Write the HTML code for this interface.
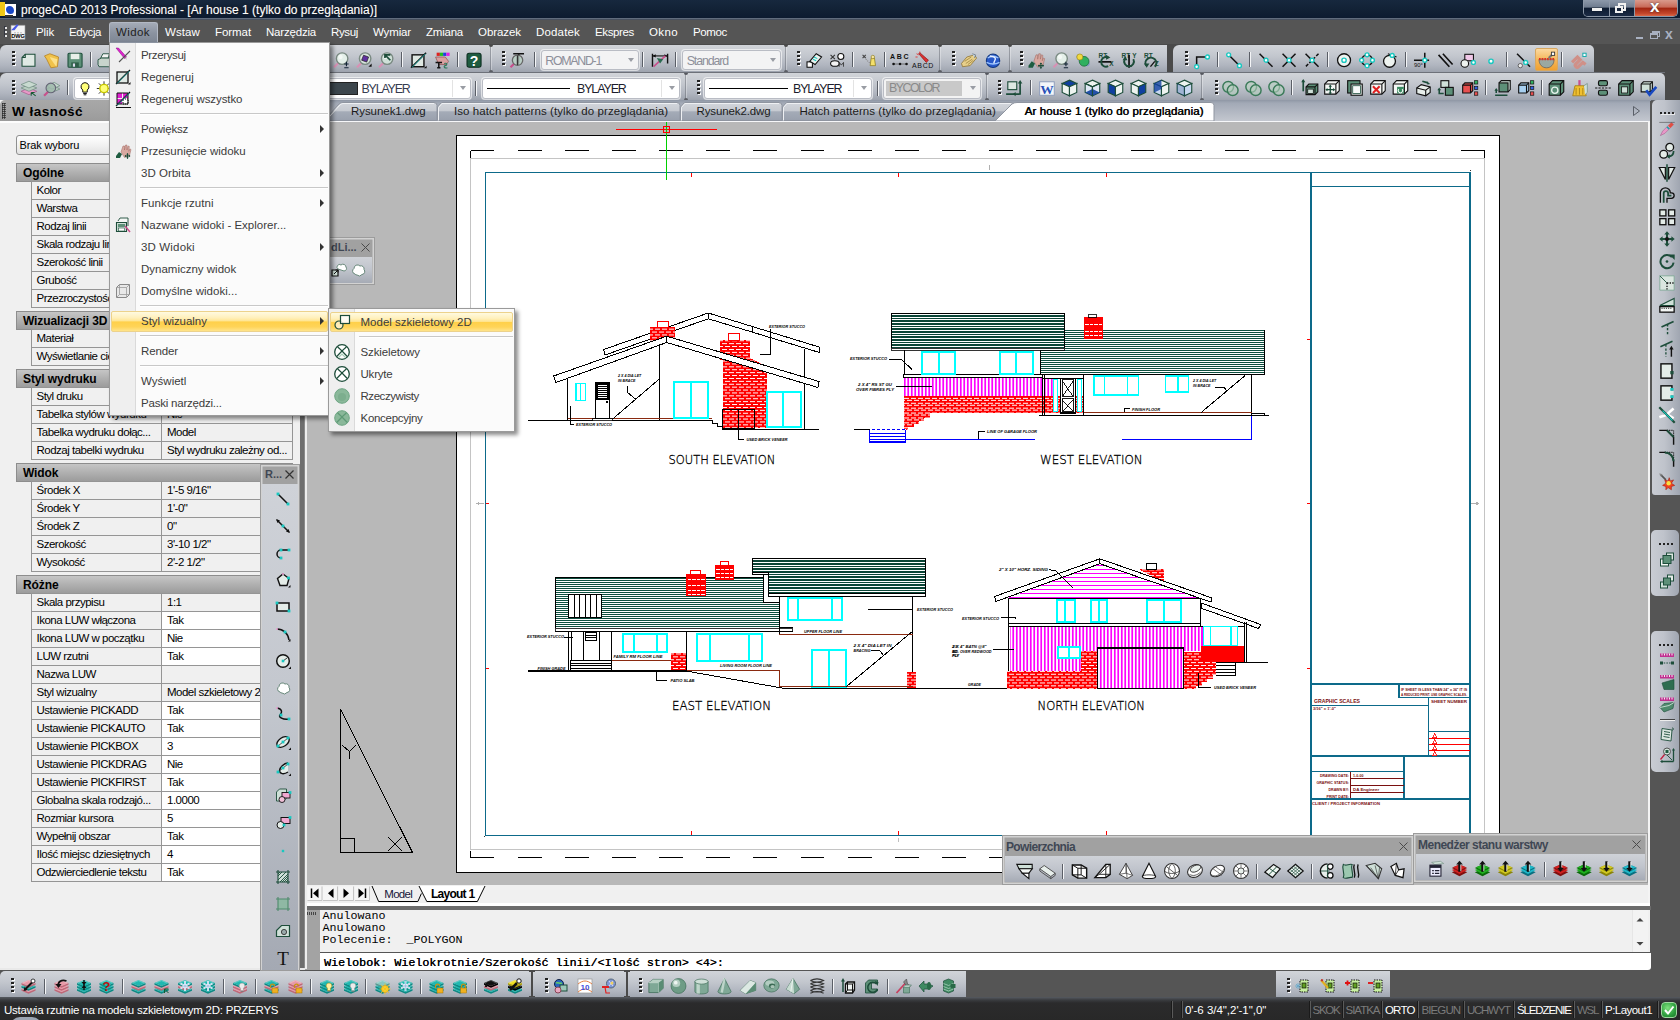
<!DOCTYPE html>
<html lang="pl"><head><meta charset="utf-8"><title>progeCAD 2013 Professional</title>
<style>
*{box-sizing:border-box;margin:0;padding:0}
html,body{width:1680px;height:1020px;overflow:hidden;background:#555;font-family:"Liberation Sans",sans-serif;font-size:12px;color:#000}
body{position:relative}
div{position:absolute}
.t{white-space:nowrap;line-height:1}
.tb{background:linear-gradient(#d1d4d9 0%,#c3c7ce 40%,#b0b5bf 75%,#9da3ae 100%)}
.sep{width:2px;height:15px;background:linear-gradient(90deg,#5a5e66 0 1px,#f4f5f7 1px 2px)}
.grip{width:2px;height:15px;background:repeating-linear-gradient(#222 0 2px,rgba(255,255,255,0) 2px 4px);filter:drop-shadow(1px 1px 0 rgba(255,255,255,.95))}
.combo{background:#fff;border:1px solid #b9bcc4;border-radius:3px;box-shadow:0 0 0 1px rgba(255,255,255,.6)}
.arr{width:0;height:0;border-left:3.5px solid transparent;border-right:3.5px solid transparent;border-top:4px solid #9a9da4}
.mi{left:0;width:218px;height:22px;color:#3c3c3c;font-size:12px;letter-spacing:.45px}
.mi span{position:absolute;left:31px;top:5px;white-space:nowrap;line-height:1}
.marr{width:0;height:0;border-top:4px solid transparent;border-bottom:4px solid transparent;border-left:4px solid #333}
.msep{height:1px;background:#c8c8c8;border-bottom:1px solid #fff;box-sizing:content-box}
.cat{left:16px;width:277px;height:19px;background:linear-gradient(#c6c6c6,#b0b0b0 50%,#9c9c9c);font-weight:bold;font-size:12px;border:1px solid #8d8d8d}
.cat span{position:absolute;left:6px;top:2.5px;line-height:1;white-space:nowrap;letter-spacing:-.1px}
.row{left:31px;width:262px;height:19px;border:1px solid #959595;background:#f0f0f0;font-size:11.5px}
.row i{position:absolute;font-style:normal;left:4.5px;top:2.5px;line-height:1;white-space:nowrap;letter-spacing:-.5px}
.row b{position:absolute;font-weight:normal;left:129px;top:0;width:130px;height:17px;border-left:1px solid #959595;overflow:hidden}
.row b u{position:absolute;text-decoration:none;left:5px;top:2.5px;line-height:1;white-space:nowrap;letter-spacing:-.5px}
.ft{background:#a1a1a1;border:1px solid #c9c9c9}
.fth{color:#3f4754;font-weight:bold;font-size:12px;letter-spacing:0}
.st{color:#fff;font-size:12px;top:1004px;white-space:nowrap;line-height:1}
.sd{top:1001px;width:2px;height:17px;background:linear-gradient(90deg,#1a1a1a 0 1px,#5a5a5a 1px 2px)}
.dim{color:#7d7d7d}
</style></head>
<body>
<div style="left:0px;top:0px;width:1680px;height:18px;background:linear-gradient(#17283e 0%,#122236 50%,#0d1b30 100%)"></div>
<div style="left:0px;top:18px;width:1680px;height:2px;background:linear-gradient(#6d7a8c,#3a4250)"></div>
<div style="left:0px;top:2px;width:5px;height:14px;background:#f0c818"></div>
<div style="left:5px;top:4px;width:11px;height:12px;background:#fff"></div>
<div style="left:6px;top:6px;width:8px;height:8px;background:#1848c8;border-radius:4px 5px 4px 5px"></div>
<div style="left:5px;top:15px;width:8px;height:2px;background:#333"></div>
<div class="t" style="left:21px;top:3.6px;font-size:12px;letter-spacing:0.007px;color:#fff;text-shadow:0 0 3px #000,0 0 1px #fff8">progeCAD 2013 Professional - [Ar house 1 (tylko do przeglądania)]</div>
<div style="left:1583px;top:0px;width:95px;height:17px;border:1px solid #8d98a8;border-top:none;border-radius:0 0 5px 5px;background:#1a2940"></div>
<div style="left:1584px;top:0px;width:26px;height:16px;background:linear-gradient(#8d99aa 0%,#6f7c8f 45%,#0d1b30 50%,#1b2a44 100%);border-right:1px solid #8d98a8;border-radius:0 0 0 4px"></div>
<div style="left:1610px;top:0px;width:25px;height:16px;background:linear-gradient(#8d99aa 0%,#6f7c8f 45%,#0d1b30 50%,#1b2a44 100%);border-right:1px solid #8d98a8"></div>
<div style="left:1635px;top:0px;width:42px;height:16px;background:linear-gradient(#d99a8c 0%,#c86a58 45%,#a02410 50%,#c4472c 85%,#dc6848 100%);border-radius:0 0 4px 0"></div>
<div style="left:1592px;top:8px;width:10px;height:3px;background:#f0f0f0;box-shadow:0 0 1px #000"></div>
<div style="left:1618px;top:3px;width:8px;height:8px;border:2px solid #f0f0f0"></div>
<div style="left:1615px;top:6px;width:8px;height:7px;border:2px solid #f0f0f0;background:#16243c"></div>
<div class="t" style="left:1650px;top:-2px;color:#fff;font-weight:bold;font-size:17px;text-shadow:0 0 2px #333">x</div>
<div style="left:0px;top:20px;width:1680px;height:24px;background:#555"></div>
<div style="left:5px;top:26.5px;width:2px;height:11px;background:repeating-linear-gradient(#e8e8e8 0 2px,transparent 2px 4px);box-shadow:-1px -1px 0 rgba(30,35,50,.6)"></div>
<div style="left:109px;top:22px;width:49px;height:21px;background:linear-gradient(#a4abb7,#8b93a0 50%,#7d8592);border:1px solid #b3b9c4;border-bottom:none;border-radius:3px 3px 0 0"></div>
<div class="t" style="left:36px;top:26.5px;font-size:11.5px;letter-spacing:-0.133px;color:#fff">Plik</div>
<div class="t" style="left:69px;top:26.5px;font-size:11.5px;letter-spacing:-0.422px;color:#fff">Edycja</div>
<div class="t" style="left:116px;top:26.5px;font-size:11.5px;letter-spacing:0.409px;color:#1e1e1e">Widok</div>
<div class="t" style="left:165px;top:26.5px;font-size:11.5px;letter-spacing:0.1px;color:#fff">Wstaw</div>
<div class="t" style="left:215px;top:26.5px;font-size:11.5px;letter-spacing:-0.07px;color:#fff">Format</div>
<div class="t" style="left:266px;top:26.5px;font-size:11.5px;letter-spacing:-0.198px;color:#fff">Narzędzia</div>
<div class="t" style="left:331px;top:26.5px;font-size:11.5px;letter-spacing:-0.353px;color:#fff">Rysuj</div>
<div class="t" style="left:373px;top:26.5px;font-size:11.5px;letter-spacing:-0.146px;color:#fff">Wymiar</div>
<div class="t" style="left:426px;top:26.5px;font-size:11.5px;letter-spacing:-0.227px;color:#fff">Zmiana</div>
<div class="t" style="left:478px;top:26.5px;font-size:11.5px;letter-spacing:-0.067px;color:#fff">Obrazek</div>
<div class="t" style="left:536px;top:26.5px;font-size:11.5px;letter-spacing:0.165px;color:#fff">Dodatek</div>
<div class="t" style="left:595px;top:26.5px;font-size:11.5px;letter-spacing:-0.364px;color:#fff">Ekspres</div>
<div class="t" style="left:649px;top:26.5px;font-size:11.5px;letter-spacing:0.375px;color:#fff">Okno</div>
<div class="t" style="left:693px;top:26.5px;font-size:11.5px;letter-spacing:-0.359px;color:#fff">Pomoc</div>
<div style="left:1636px;top:37px;width:7px;height:2px;background:#a9b1c1"></div>
<div style="left:1652px;top:31px;width:8px;height:6px;border:1px solid #a9b1c1;border-top-width:2px"></div>
<div style="left:1650px;top:33px;width:8px;height:6px;border:1px solid #a9b1c1;border-top-width:2px;background:#555"></div>
<div class="t" style="left:1665px;top:27px;color:#a9b1c1;font-weight:bold;font-size:14px">x</div>
<svg style="position:absolute;left:307px;top:121px" width="1342" height="764" viewBox="307 121 1342 764" font-family="Liberation Sans,sans-serif" shape-rendering="crispEdges"><defs>
<pattern id="gh" width="10" height="2" patternUnits="userSpaceOnUse"><rect width="10" height="2" fill="#fff"/><rect y="0" width="10" height="1" fill="#0d4f3f"/></pattern>
<pattern id="gh2" width="10" height="8" patternUnits="userSpaceOnUse"><rect width="10" height="8" fill="#fff"/><rect y="0" width="10" height="2" fill="#0a4536"/><rect y="3" width="10" height="2" fill="#0a4536"/><rect y="6" width="10" height="1" fill="#0a4536"/></pattern>
<pattern id="br" width="7" height="5.8" patternUnits="userSpaceOnUse"><rect width="7" height="5.8" fill="#ff0000"/><rect x="0.8" y="1" width="5" height=".85" fill="#fff"/><rect x="4.3" y="3.9" width="5" height=".85" fill="#fff"/><rect x="-2.7" y="3.9" width="5" height=".85" fill="#fff"/></pattern>
<pattern id="br2" width="7" height="4.9" patternUnits="userSpaceOnUse"><rect width="7" height="4.9" fill="#ff0000"/><rect x="0.8" y="0.8" width="5" height=".85" fill="#fff"/><rect x="4.3" y="3.25" width="5" height=".85" fill="#fff"/><rect x="-2.7" y="3.25" width="5" height=".85" fill="#fff"/></pattern>
<pattern id="mv" x="0" width="3.5" height="10" patternUnits="userSpaceOnUse"><rect width="3.5" height="10" fill="#fff"/><rect x="0.8" width="1.9" height="10" fill="#ff00ff"/></pattern>
<pattern id="mv2" x="0" width="3" height="10" patternUnits="userSpaceOnUse"><rect width="3" height="10" fill="#fff"/><rect x="1" width="1.6" height="10" fill="#ff00ff"/></pattern>
<pattern id="mh" width="10" height="4" patternUnits="userSpaceOnUse"><rect width="10" height="4" fill="#fff"/><rect y="1" width="10" height="1" fill="#ff00ff"/></pattern>
</defs><rect x="307" y="121" width="1342" height="764" fill="#b8b8b8"/><rect x="456.500" y="135.500" width="1043" height="737" fill="#fff" stroke="#000" stroke-width="1"/><line x1="470.500" y1="150.5" x2="1484.500" y2="150.5" stroke="#000" stroke-width="1" stroke-dasharray="23.850 23.300"/><line x1="470.500" y1="857.5" x2="1484.500" y2="857.5" stroke="#000" stroke-width="1" stroke-dasharray="23.850 23.300"/><line x1="470.5" y1="150.5" x2="470.5" y2="157.5" stroke="#000" stroke-width="1" /><line x1="1484.5" y1="150.5" x2="1484.5" y2="157.5" stroke="#000" stroke-width="1" /><line x1="470.5" y1="857.5" x2="470.5" y2="850.5" stroke="#000" stroke-width="1" /><line x1="1484.5" y1="857.5" x2="1484.5" y2="850.5" stroke="#000" stroke-width="1" /><rect x="470.500" y="158" width="1014" height="691.500" fill="none" stroke="#c4c4c4" stroke-width="1"/><rect x="485.500" y="172.500" width="984.500" height="663" fill="none" stroke="#0d6a8a" stroke-width="1.2"/><line x1="1311" y1="172" x2="1311" y2="835" stroke="#0d6a8a" stroke-width="2.2" /><line x1="1311" y1="186.5" x2="1470" y2="186.5" stroke="#0d6a8a" stroke-width="1.2" /><line x1="1311" y1="684" x2="1470" y2="684" stroke="#0d6a8a" stroke-width="1.5" /><rect x="1399" y="684" width="71.00" height="13.50" fill="none" stroke="#0d6a8a" stroke-width="1.2" /><line x1="1311" y1="705" x2="1428.5" y2="705" stroke="#0d6a8a" stroke-width="1" /><line x1="1428.5" y1="697.5" x2="1428.5" y2="756" stroke="#0d6a8a" stroke-width="1.2" /><line x1="1428.5" y1="731.5" x2="1470" y2="731.5" stroke="#0d6a8a" stroke-width="1" /><line x1="1428.5" y1="738.5" x2="1470" y2="738.5" stroke="#ff0000" stroke-width="1" /><line x1="1428.5" y1="744.5" x2="1470" y2="744.5" stroke="#ff0000" stroke-width="1" /><line x1="1428.5" y1="750.5" x2="1470" y2="750.5" stroke="#ff0000" stroke-width="1" /><line x1="1311" y1="756" x2="1470" y2="756" stroke="#0d6a8a" stroke-width="1.5" /><line x1="1404" y1="756" x2="1404" y2="799" stroke="#0d6a8a" stroke-width="1.2" /><line x1="1311" y1="771.5" x2="1404" y2="771.5" stroke="#0d6a8a" stroke-width="1" /><line x1="1350.5" y1="778.5" x2="1404" y2="778.5" stroke="#7a1010" stroke-width="1" /><line x1="1350.5" y1="785" x2="1404" y2="785" stroke="#7a1010" stroke-width="1" /><line x1="1350.5" y1="792" x2="1404" y2="792" stroke="#7a1010" stroke-width="1" /><line x1="1350.5" y1="771.5" x2="1350.5" y2="799" stroke="#7a1010" stroke-width="1" /><line x1="1311" y1="799" x2="1470" y2="799" stroke="#0d6a8a" stroke-width="2" /><text x="1314" y="703" font-size="5.6" font-style="normal" font-weight="bold" text-anchor="start" fill="#7a1010" textLength="46" lengthAdjust="spacingAndGlyphs">GRAPHIC SCALES</text><text x="1313" y="710" font-size="4" font-style="normal" font-weight="bold" text-anchor="start" fill="#7a1010">3/16" = 1'-0"</text><text x="1431" y="703" font-size="4" font-style="normal" font-weight="bold" text-anchor="start" fill="#7a1010" textLength="36" lengthAdjust="spacingAndGlyphs">SHEET NUMBER</text><text x="1401" y="691" font-size="3" font-style="normal" font-weight="bold" text-anchor="start" fill="#7a1010" textLength="66" lengthAdjust="spacingAndGlyphs">IF SHEET IS LESS THAN 24" x 36" IT IS</text><text x="1401" y="695.5" font-size="3" font-style="normal" font-weight="bold" text-anchor="start" fill="#7a1010" textLength="66" lengthAdjust="spacingAndGlyphs">A REDUCED PRINT. USE GRAPHIC SCALES.</text><text x="1349" y="777" font-size="3.6" font-style="normal" font-weight="bold" text-anchor="end" fill="#7a1010">DRAWING DATE:</text><text x="1349" y="784" font-size="3.6" font-style="normal" font-weight="bold" text-anchor="end" fill="#7a1010">GRAPHIC STATUS:</text><text x="1349" y="791" font-size="3.6" font-style="normal" font-weight="bold" text-anchor="end" fill="#7a1010">DRAWN BY:</text><text x="1349" y="798" font-size="3.6" font-style="normal" font-weight="bold" text-anchor="end" fill="#7a1010">PRINT DATE:</text><text x="1353" y="777" font-size="3.6" font-style="normal" font-weight="bold" text-anchor="start" fill="#7a1010">1-0-00</text><text x="1353" y="791" font-size="4.4" font-style="normal" font-weight="bold" text-anchor="start" fill="#7a1010">DA  Engineer</text><text x="1312" y="804.5" font-size="3.6" font-style="normal" font-weight="bold" text-anchor="start" fill="#7a1010" textLength="68" lengthAdjust="spacingAndGlyphs">CLIENT / PROJECT INFORMATION</text><polygon points="1432,737.5 1434.5,732.5 1437,737.5" fill="#fff" stroke="#ff0000" stroke-width="0.8" /><polygon points="1432,743.5 1434.5,738.5 1437,743.5" fill="#fff" stroke="#ff0000" stroke-width="0.8" /><polygon points="1432,749.5 1434.5,744.5 1437,749.5" fill="#fff" stroke="#ff0000" stroke-width="0.8" /><polygon points="1432,755.5 1434.5,750.5 1437,755.5" fill="#fff" stroke="#ff0000" stroke-width="0.8" /><line x1="691.5" y1="173" x2="691.5" y2="177" stroke="#ff0000" stroke-width="1" /><line x1="691.5" y1="831" x2="691.5" y2="835" stroke="#ff0000" stroke-width="1" /><line x1="898.5" y1="173" x2="898.5" y2="177" stroke="#ff0000" stroke-width="1" /><line x1="898.5" y1="831" x2="898.5" y2="835" stroke="#ff0000" stroke-width="1" /><line x1="1106.5" y1="173" x2="1106.5" y2="177" stroke="#ff0000" stroke-width="1" /><line x1="1106.5" y1="831" x2="1106.5" y2="835" stroke="#ff0000" stroke-width="1" /><line x1="486" y1="339.5" x2="489" y2="339.5" stroke="#ff0000" stroke-width="1" /><line x1="1307" y1="339.5" x2="1310" y2="339.5" stroke="#ff0000" stroke-width="1" /><line x1="486" y1="503.5" x2="489" y2="503.5" stroke="#ff0000" stroke-width="1" /><line x1="1307" y1="503.5" x2="1310" y2="503.5" stroke="#ff0000" stroke-width="1" /><line x1="486" y1="668.5" x2="489" y2="668.5" stroke="#ff0000" stroke-width="1" /><line x1="1307" y1="668.5" x2="1310" y2="668.5" stroke="#ff0000" stroke-width="1" /><line x1="476" y1="503.5" x2="484" y2="503.5" stroke="#b0b0b0" stroke-width="1" /><line x1="1471" y1="503.5" x2="1479" y2="503.5" stroke="#b0b0b0" stroke-width="1" /><polygon points="1479,503.5 1476,501.5 1476,505.5" fill="#b0b0b0" stroke="none" stroke-width="1" /><polygon points="476,503.5 479,501.5 479,505.5" fill="#b0b0b0" stroke="none" stroke-width="1" /><line x1="989.5" y1="165" x2="989.5" y2="170" stroke="#b0b0b0" stroke-width="1" /><line x1="898.5" y1="838" x2="898.5" y2="842" stroke="#c0c0c0" stroke-width="1" /><rect x="1470" y="170" width="1.2" height="1.2" fill="#333"/><rect x="484" y="836" width="1.2" height="1.2" fill="#333"/><line x1="616" y1="129.5" x2="717" y2="129.5" stroke="#ff0000" stroke-width="1" /><line x1="666.5" y1="122" x2="666.5" y2="180" stroke="#00d000" stroke-width="1" /><rect x="663.5" y="126.5" width="6.00" height="6.00" fill="none" stroke="#ff0000" stroke-width="1" /><polyline points="340.5,709 340.5,852.5 412.5,852.5 340.5,709" stroke="#000" stroke-width="1" fill="none" /><polyline points="340.5,838.5 354.5,838.5 354.5,852.5" stroke="#000" stroke-width="1" fill="none" /><line x1="388" y1="837" x2="402" y2="851" stroke="#000" stroke-width="1" /><line x1="402" y1="837" x2="388" y2="851" stroke="#000" stroke-width="1" /><polyline points="342,745 349.5,751.5 356,745" stroke="#000" stroke-width="1" fill="none" /><line x1="349.5" y1="751.5" x2="349.5" y2="758.5" stroke="#000" stroke-width="1" /><polygon points="603.6,349.5 708.3,313 819,347 819.5,352.5 708.3,318.8 605,355" fill="#fff" stroke="#000" stroke-width="1" /><line x1="708.3" y1="313" x2="708.3" y2="318.8" stroke="#000" stroke-width="1" /><line x1="752" y1="326.5" x2="752" y2="332" stroke="#000" stroke-width="1" /><rect x="649.5" y="327" width="25.50" height="15.00" fill="url(#br)" stroke="none" stroke-width="0" /><rect x="657" y="321" width="11.00" height="6.00" fill="#fff" stroke="#ff0000" stroke-width="1" /><line x1="804.8" y1="348.5" x2="804.8" y2="429" stroke="#000" stroke-width="1" /><rect x="719.5" y="340" width="30.00" height="20.00" fill="url(#br)" stroke="none" stroke-width="0" /><rect x="728.6" y="333.6" width="10.70" height="6.40" fill="#fff" stroke="#ff0000" stroke-width="1" /><polygon points="722.6,358 749.5,358 766.7,366.5 766.7,428 722.6,428" fill="url(#br)" stroke="none" stroke-width="1" /><polygon points="553.6,376 666.7,336.2 819,381.5 818,387.5 666.7,342.5 556,382.5" fill="#fff" stroke="#000" stroke-width="1" /><line x1="666.7" y1="336.2" x2="666.7" y2="342.5" stroke="#000" stroke-width="1" /><line x1="567.9" y1="378" x2="567.9" y2="420.5" stroke="#000" stroke-width="1" /><line x1="659.5" y1="344" x2="659.5" y2="420.5" stroke="#000" stroke-width="1" /><polyline points="528,420.5 712,420.5 712,423 717,423 717,426 722.6,426 722.6,429.3 819,429.3" stroke="#000" stroke-width="1" fill="none" /><line x1="568" y1="418.5" x2="712" y2="418.5" stroke="#8a2a10" stroke-width="1" /><rect x="576" y="383.6" width="9.70" height="17.10" fill="#fff" stroke="#00ffff" stroke-width="1.2" /><line x1="580.8" y1="383.6" x2="580.8" y2="400.7" stroke="#00ffff" stroke-width="1.2" /><rect x="595.5" y="382.5" width="14.00" height="36.00" fill="#fff" stroke="#000" stroke-width="1.6" /><rect x="596" y="383" width="13.00" height="16.50" fill="#000" stroke="none" stroke-width="0" /><line x1="598" y1="385.5" x2="607" y2="385.5" stroke="#fff" stroke-width="1" /><line x1="598" y1="387.5" x2="607" y2="387.5" stroke="#fff" stroke-width="1" /><line x1="598" y1="389.5" x2="607" y2="389.5" stroke="#fff" stroke-width="1" /><line x1="598" y1="391.5" x2="607" y2="391.5" stroke="#fff" stroke-width="1" /><line x1="598" y1="393.5" x2="607" y2="393.5" stroke="#fff" stroke-width="1" /><line x1="598" y1="395.5" x2="607" y2="395.5" stroke="#fff" stroke-width="1" /><line x1="598" y1="397.5" x2="607" y2="397.5" stroke="#fff" stroke-width="1" /><rect x="606" y="400.5" width="2.00" height="2.00" fill="#000" stroke="none" stroke-width="0" /><rect x="592.5" y="418.6" width="19.50" height="1.90" fill="#fff" stroke="#000" stroke-width="0.8" /><rect x="673.8" y="381.7" width="33.80" height="36.20" fill="#fff" stroke="#00ffff" stroke-width="2" /><line x1="690.5" y1="381.7" x2="690.5" y2="417.9" stroke="#00ffff" stroke-width="2" /><rect x="767" y="391.7" width="33.50" height="35.30" fill="#fff" stroke="#00ffff" stroke-width="2" /><line x1="783" y1="391.7" x2="783" y2="427" stroke="#00ffff" stroke-width="2" /><rect x="722.6" y="409.8" width="32.20" height="18.70" fill="none" stroke="#000" stroke-width="1.2" /><line x1="613" y1="418.6" x2="659" y2="379.3" stroke="#000" stroke-width="1" /><polyline points="627.5,385.5 627.5,392.5 635.5,399" stroke="#000" stroke-width="1" fill="none" /><text x="618" y="376.5" font-size="3.6" font-style="italic" font-weight="bold" text-anchor="start" fill="#000">2 X 4 DIA LET</text><text x="618" y="381.5" font-size="3.6" font-style="italic" font-weight="bold" text-anchor="start" fill="#000">IN BRACE</text><polyline points="570.5,406 570.5,424.5 574,424.5" stroke="#000" stroke-width="1" fill="none" /><text x="576" y="426" font-size="3.6" font-style="italic" font-weight="bold" text-anchor="start" fill="#000" textLength="36" lengthAdjust="spacingAndGlyphs">EXTERIOR STUCCO</text><polyline points="738.3,410 738.3,439.5 744,439.5" stroke="#000" stroke-width="1" fill="none" /><text x="746.5" y="441" font-size="3.6" font-style="italic" font-weight="bold" text-anchor="start" fill="#000" textLength="41" lengthAdjust="spacingAndGlyphs">USED BRICK VENEER</text><polyline points="770.5,329 770.5,354.5 760,354.5" stroke="#000" stroke-width="1" fill="none" /><text x="769" y="328" font-size="3.6" font-style="italic" font-weight="bold" text-anchor="start" fill="#000" textLength="36" lengthAdjust="spacingAndGlyphs">EXTERIOR STUCCO</text><text x="668.6" y="464" font-family="DejaVu Sans,sans-serif" font-weight="200" font-size="13" textLength="106.6" lengthAdjust="spacingAndGlyphs" fill="#000" stroke="#000" stroke-width=".3">SOUTH ELEVATION</text><rect x="1040.4" y="330" width="224.10" height="44.30" fill="url(#gh)" stroke="none" stroke-width="0" /><polyline points="1040.4,330 1040.4,374.3 1264.5,374.3 1264.5,330" stroke="#000" stroke-width="1" fill="none" /><rect x="891.2" y="313.3" width="173.30" height="34.70" fill="url(#gh2)" stroke="#000" stroke-width="1" /><rect x="891.2" y="348" width="173.30" height="2.20" fill="#fff" stroke="#000" stroke-width="0.8" /><rect x="1083.7" y="317.4" width="19.20" height="21.10" fill="#ff0000" stroke="none" stroke-width="0" /><line x1="1085" y1="324" x2="1101.5" y2="324" stroke="#fff" stroke-width="1" stroke-dasharray="3.5 1"/><line x1="1085" y1="331" x2="1101.5" y2="331" stroke="#fff" stroke-width="1" stroke-dasharray="3.5 1"/><line x1="1085" y1="335" x2="1101.5" y2="335" stroke="#fff" stroke-width="1" stroke-dasharray="3.5 1"/><rect x="1088.6" y="314" width="8.20" height="3.40" fill="#fff" stroke="#000" stroke-width="0.8" /><line x1="904.3" y1="350.2" x2="904.3" y2="374.3" stroke="#000" stroke-width="1" /><line x1="903.5" y1="374.3" x2="1041.3" y2="374.3" stroke="#000" stroke-width="1" /><line x1="1040.4" y1="350" x2="1040.4" y2="374" stroke="#000" stroke-width="1" /><rect x="921.6" y="352.2" width="33.40" height="21.30" fill="#fff" stroke="#00ffff" stroke-width="2" /><line x1="938.6" y1="352.2" x2="938.6" y2="373.5" stroke="#00ffff" stroke-width="2" /><rect x="999.6" y="352.2" width="32.90" height="21.30" fill="#fff" stroke="#00ffff" stroke-width="2" /><line x1="1016" y1="352.2" x2="1016" y2="373.5" stroke="#00ffff" stroke-width="2" /><rect x="903.5" y="378" width="150.10" height="18.20" fill="url(#mv)" stroke="none" stroke-width="0" /><line x1="903.5" y1="377.8" x2="1042" y2="377.8" stroke="#000" stroke-width="1" /><line x1="903.5" y1="374.3" x2="903.5" y2="378" stroke="#000" stroke-width="1" /><polygon points="903.5,396.2 1083.7,396.2 1083.7,413.2 929.7,413.2 929.7,417.5 923.8,417.5 923.8,421 918.9,421 918.9,424 914,424 914,427 908.1,427 908.1,430 903.5,430" fill="url(#br2)" stroke="none" stroke-width="1" /><line x1="1042" y1="374.3" x2="1042" y2="415.5" stroke="#000" stroke-width="1" /><line x1="1044" y1="374.3" x2="1044" y2="415.5" stroke="#000" stroke-width="1" /><line x1="1042" y1="378" x2="1083.7" y2="378" stroke="#000" stroke-width="1" /><rect x="1053.5" y="379.5" width="4.00" height="32.00" fill="#fff" stroke="#00ffff" stroke-width="1" /><rect x="1077.5" y="379.5" width="4.00" height="32.00" fill="#fff" stroke="#00ffff" stroke-width="1" /><rect x="1060.5" y="378.5" width="15.00" height="34.50" fill="#fff" stroke="#000" stroke-width="1.5" /><rect x="1062" y="379.5" width="11.50" height="16.50" fill="#fff" stroke="#000" stroke-width="0.9" /><line x1="1062" y1="379.5" x2="1073.5" y2="396" stroke="#000" stroke-width="0.9" /><line x1="1073.5" y1="379.5" x2="1062" y2="396" stroke="#000" stroke-width="0.9" /><rect x="1062" y="398.5" width="11.50" height="12.50" fill="#fff" stroke="#000" stroke-width="0.9" /><line x1="1062" y1="398.5" x2="1073.5" y2="411" stroke="#000" stroke-width="0.9" /><line x1="1073.5" y1="398.5" x2="1062" y2="411" stroke="#000" stroke-width="0.9" /><line x1="1083.7" y1="374" x2="1083.7" y2="415.5" stroke="#000" stroke-width="1" /><line x1="1251.6" y1="374" x2="1251.6" y2="415.5" stroke="#000" stroke-width="1" /><line x1="1251.6" y1="416" x2="1251.6" y2="439.2" stroke="#0000ff" stroke-width="1.2" /><line x1="1039.3" y1="415.5" x2="1269" y2="415.5" stroke="#000" stroke-width="1" /><polyline points="1251.6,413.5 1264.5,413.5 1264.5,415.5" stroke="#000" stroke-width="1" fill="none" /><line x1="1083.7" y1="412.5" x2="1251.6" y2="412.5" stroke="#8a2a10" stroke-width="1" /><rect x="1094" y="376" width="44.50" height="18.90" fill="#fff" stroke="#00ffff" stroke-width="1.4" /><line x1="1104.2" y1="376" x2="1104.2" y2="394.9" stroke="#00ffff" stroke-width="1.4" /><line x1="1127.5" y1="376" x2="1127.5" y2="394.9" stroke="#00ffff" stroke-width="1.4" /><rect x="1165.3" y="376" width="23.00" height="16.00" fill="#fff" stroke="#00ffff" stroke-width="1.4" /><line x1="1178" y1="376" x2="1178" y2="392" stroke="#00ffff" stroke-width="1.4" /><line x1="1200.9" y1="412.7" x2="1245.3" y2="375.4" stroke="#000" stroke-width="1" /><polyline points="1215,387.5 1224,387.5 1227,391" stroke="#000" stroke-width="1" fill="none" /><text x="1193" y="381.5" font-size="3.6" font-style="italic" font-weight="bold" text-anchor="start" fill="#000">2 X 4 DIA LET</text><text x="1193" y="386.5" font-size="3.6" font-style="italic" font-weight="bold" text-anchor="start" fill="#000">IN BRACE</text><polyline points="1124,411.5 1124,408.8 1130,408.8" stroke="#000" stroke-width="1" fill="none" /><text x="1132" y="410.5" font-size="3.6" font-style="italic" font-weight="bold" text-anchor="start" fill="#000" textLength="28" lengthAdjust="spacingAndGlyphs">FINISH FLOOR</text><line x1="905.7" y1="439.2" x2="1035" y2="439.2" stroke="#0000ff" stroke-width="1.2" /><line x1="1122" y1="439.2" x2="1251.6" y2="439.2" stroke="#0000ff" stroke-width="1.2" /><rect x="869.6" y="429.6" width="36.10" height="12.40" fill="#fff" stroke="#0000ff" stroke-width="1.2" /><line x1="869.6" y1="433" x2="905.7" y2="433" stroke="#0000ff" stroke-width="1" /><line x1="869.6" y1="436" x2="905.7" y2="436" stroke="#0000ff" stroke-width="1" /><line x1="869.6" y1="439" x2="905.7" y2="439" stroke="#0000ff" stroke-width="1" /><line x1="869.6" y1="429.6" x2="905.7" y2="429.6" stroke="#fff" stroke-width="1.4" stroke-dasharray="2 3"/><line x1="853.7" y1="429" x2="869.6" y2="429" stroke="#000" stroke-width="1" /><polyline points="978.5,439.2 978.5,431 985,431" stroke="#000" stroke-width="1" fill="none" /><text x="987" y="432.5" font-size="3.6" font-style="italic" font-weight="bold" text-anchor="start" fill="#000" textLength="50" lengthAdjust="spacingAndGlyphs">LINE OF GARAGE FLOOR</text><text x="850" y="360" font-size="3.6" font-style="italic" font-weight="bold" text-anchor="start" fill="#000" textLength="37" lengthAdjust="spacingAndGlyphs">EXTERIOR STUCCO</text><polyline points="889,359 901,359 912,369.5" stroke="#000" stroke-width="1" fill="none" /><text x="858" y="385.5" font-size="3.6" font-style="italic" font-weight="bold" text-anchor="start" fill="#000" textLength="34" lengthAdjust="spacingAndGlyphs">2 X 4" RS ST GU</text><text x="856" y="390.5" font-size="3.6" font-style="italic" font-weight="bold" text-anchor="start" fill="#000" textLength="38" lengthAdjust="spacingAndGlyphs">OVER FIBRES PLY</text><line x1="896" y1="386.5" x2="932" y2="386.5" stroke="#000" stroke-width="1" /><text x="1040" y="464" font-family="DejaVu Sans,sans-serif" font-weight="200" font-size="13" textLength="102.6" lengthAdjust="spacingAndGlyphs" fill="#000" stroke="#000" stroke-width=".3">WEST ELEVATION</text><polygon points="752.2,558.3 925.8,558.3 925.8,596.5 768.3,596.5 768.3,574.4 752.2,574.4" fill="url(#gh2)" stroke="#000" stroke-width="1" /><rect x="768.3" y="593.5" width="157.50" height="3.00" fill="#fff" stroke="#000" stroke-width="1" /><rect x="752.2" y="572" width="16.10" height="2.40" fill="#fff" stroke="#000" stroke-width="1" /><polygon points="555.3,577.5 763.5,577.5 763.5,602 779.4,602 779.4,627.6 792.5,627.6 792.5,631.2 555.3,631.2" fill="url(#gh)" stroke="#000" stroke-width="1" /><line x1="763.5" y1="574.4" x2="763.5" y2="602" stroke="#000" stroke-width="1" /><rect x="555.3" y="628.2" width="237.20" height="3.00" fill="#fff" stroke="#000" stroke-width="0.8" /><rect x="568.5" y="594.8" width="32.80" height="22.40" fill="#fff" stroke="#000" stroke-width="1" /><line x1="574" y1="594.8" x2="574" y2="617.2" stroke="#000" stroke-width="1" /><line x1="579.5" y1="594.8" x2="579.5" y2="617.2" stroke="#000" stroke-width="1" /><line x1="585" y1="594.8" x2="585" y2="617.2" stroke="#000" stroke-width="1" /><line x1="590.5" y1="594.8" x2="590.5" y2="617.2" stroke="#000" stroke-width="1" /><line x1="596" y1="594.8" x2="596" y2="617.2" stroke="#000" stroke-width="1" /><rect x="686.2" y="574.2" width="19.70" height="21.90" fill="#ff0000" stroke="none" stroke-width="0" /><rect x="690.8" y="570" width="9.20" height="4.20" fill="#fff" stroke="#ff0000" stroke-width="1" /><line x1="687.5" y1="579" x2="704.5" y2="579" stroke="#fff" stroke-width="1" stroke-dasharray="3.5 1"/><line x1="687.5" y1="585" x2="704.5" y2="585" stroke="#fff" stroke-width="1" stroke-dasharray="3.5 1"/><line x1="687.5" y1="590" x2="704.5" y2="590" stroke="#fff" stroke-width="1" stroke-dasharray="3.5 1"/><line x1="687.5" y1="594" x2="704.5" y2="594" stroke="#fff" stroke-width="1" stroke-dasharray="3.5 1"/><rect x="715" y="565.2" width="19.10" height="14.50" fill="#ff0000" stroke="none" stroke-width="0" /><rect x="720.4" y="561.4" width="8.20" height="3.80" fill="#fff" stroke="#ff0000" stroke-width="1" /><line x1="716" y1="569" x2="733" y2="569" stroke="#fff" stroke-width="1" stroke-dasharray="3.5 1"/><line x1="716" y1="573" x2="733" y2="573" stroke="#fff" stroke-width="1" stroke-dasharray="3.5 1"/><line x1="716" y1="577" x2="733" y2="577" stroke="#fff" stroke-width="1" stroke-dasharray="3.5 1"/><line x1="568.5" y1="631.2" x2="568.5" y2="670.9" stroke="#000" stroke-width="1" /><line x1="571.2" y1="631.2" x2="571.2" y2="670.9" stroke="#000" stroke-width="1" /><line x1="611.7" y1="631.2" x2="611.7" y2="670.9" stroke="#000" stroke-width="1" /><line x1="686.7" y1="631.2" x2="686.7" y2="670" stroke="#000" stroke-width="1" /><line x1="779.3" y1="596" x2="779.3" y2="634.5" stroke="#000" stroke-width="1" /><line x1="912.6" y1="596.1" x2="912.6" y2="687.9" stroke="#000" stroke-width="1" /><line x1="583.5" y1="631.2" x2="583.5" y2="660.5" stroke="#000" stroke-width="1" /><line x1="599.8" y1="631.2" x2="599.8" y2="660.5" stroke="#000" stroke-width="1" /><line x1="581" y1="660.5" x2="602" y2="660.5" stroke="#000" stroke-width="1.6" /><rect x="585.5" y="632" width="11.00" height="8.00" fill="#fff" stroke="#000" stroke-width="1" /><line x1="585.5" y1="632.5" x2="596.5" y2="632.5" stroke="#000" stroke-width="1.6" /><line x1="585.5" y1="635" x2="596.5" y2="635" stroke="#000" stroke-width="1" /><line x1="585.5" y1="637.5" x2="596.5" y2="637.5" stroke="#000" stroke-width="1" /><rect x="570.6" y="660.5" width="41.10" height="10.40" fill="#fff" stroke="#000" stroke-width="1" /><line x1="570.6" y1="663" x2="611.7" y2="663" stroke="#000" stroke-width="1" /><line x1="570.6" y1="665.5" x2="611.7" y2="665.5" stroke="#000" stroke-width="1" /><line x1="570.6" y1="668" x2="611.7" y2="668" stroke="#000" stroke-width="1" /><rect x="623.2" y="633.6" width="43.80" height="18.10" fill="#fff" stroke="#00ffff" stroke-width="2" /><line x1="634.2" y1="633.6" x2="634.2" y2="651.7" stroke="#00ffff" stroke-width="2" /><line x1="656.6" y1="633.6" x2="656.6" y2="651.7" stroke="#00ffff" stroke-width="2" /><rect x="697.2" y="633.6" width="65.10" height="27.40" fill="#fff" stroke="#00ffff" stroke-width="2" /><line x1="710.3" y1="633.6" x2="710.3" y2="661" stroke="#00ffff" stroke-width="2" /><line x1="749.2" y1="633.6" x2="749.2" y2="661" stroke="#00ffff" stroke-width="2" /><rect x="787.5" y="597.5" width="54.80" height="22.50" fill="#fff" stroke="#00ffff" stroke-width="2" /><line x1="797.9" y1="597.5" x2="797.9" y2="620" stroke="#00ffff" stroke-width="2" /><line x1="831.9" y1="597.5" x2="831.9" y2="620" stroke="#00ffff" stroke-width="2" /><rect x="812.2" y="650.4" width="33.40" height="36.10" fill="#fff" stroke="#00ffff" stroke-width="2" /><line x1="828.6" y1="650.4" x2="828.6" y2="686.5" stroke="#00ffff" stroke-width="2" /><rect x="671.1" y="652.8" width="15.10" height="16.70" fill="url(#br)" stroke="none" stroke-width="0" /><rect x="907.4" y="672" width="8.80" height="15.90" fill="url(#br)" stroke="none" stroke-width="0" /><line x1="527.9" y1="671" x2="688.9" y2="671" stroke="#000" stroke-width="2" /><polyline points="688.9,671.5 784.8,688.5 1196,688.5" stroke="#000" stroke-width="1" fill="none" /><line x1="611.7" y1="660.5" x2="671.1" y2="660.5" stroke="#8a2a10" stroke-width="1" /><line x1="686.7" y1="670" x2="779.3" y2="670" stroke="#8a2a10" stroke-width="1" /><line x1="779.3" y1="670" x2="779.3" y2="686.5" stroke="#8a2a10" stroke-width="1" /><line x1="779.3" y1="686.5" x2="912.6" y2="686.5" stroke="#8a2a10" stroke-width="1" /><line x1="779.3" y1="634.5" x2="912.6" y2="634.5" stroke="#8a2a10" stroke-width="1" /><line x1="846.4" y1="686.5" x2="912.1" y2="631.7" stroke="#000" stroke-width="1" /><polyline points="656.6,670.9 656.6,680.2 667,680.2" stroke="#000" stroke-width="1" fill="none" /><text x="670.5" y="681.5" font-size="3.6" font-style="italic" font-weight="bold" text-anchor="start" fill="#000" textLength="24" lengthAdjust="spacingAndGlyphs">PATIO SLAB</text><line x1="868.3" y1="609.3" x2="912.6" y2="609.3" stroke="#000" stroke-width="1" /><text x="917" y="611" font-size="3.6" font-style="italic" font-weight="bold" text-anchor="start" fill="#000" textLength="36" lengthAdjust="spacingAndGlyphs">EXTERIOR STUCCO</text><text x="527" y="638" font-size="3.6" font-style="italic" font-weight="bold" text-anchor="start" fill="#000" textLength="37" lengthAdjust="spacingAndGlyphs">EXTERIOR STUCCO</text><line x1="564" y1="637" x2="573" y2="637" stroke="#000" stroke-width="1" /><text x="537.5" y="669.5" font-size="3.6" font-style="italic" font-weight="bold" text-anchor="start" fill="#000" textLength="28" lengthAdjust="spacingAndGlyphs">FINISH GRADE</text><text x="613.5" y="657.5" font-size="3.6" font-style="italic" font-weight="bold" text-anchor="start" fill="#000" textLength="49" lengthAdjust="spacingAndGlyphs">FAMILY RM FLOOR LINE</text><text x="720" y="667" font-size="3.6" font-style="italic" font-weight="bold" text-anchor="start" fill="#000" textLength="52" lengthAdjust="spacingAndGlyphs">LIVING ROOM FLOOR LINE</text><text x="804" y="632.5" font-size="3.6" font-style="italic" font-weight="bold" text-anchor="start" fill="#000" textLength="38" lengthAdjust="spacingAndGlyphs">UPPER FLOOR LINE</text><text x="853.5" y="646.5" font-size="3.6" font-style="italic" font-weight="bold" text-anchor="start" fill="#000" textLength="38" lengthAdjust="spacingAndGlyphs">2 X 4" DIA LET IN</text><text x="853.5" y="651.5" font-size="3.6" font-style="italic" font-weight="bold" text-anchor="start" fill="#000" textLength="17" lengthAdjust="spacingAndGlyphs">BRACING</text><polyline points="871,650 879,650 883,654.5" stroke="#000" stroke-width="1" fill="none" /><text x="952" y="648" font-size="3.6" font-style="italic" font-weight="bold" text-anchor="start" fill="#000">2 X</text><text x="952" y="652.5" font-size="3.6" font-style="italic" font-weight="bold" text-anchor="start" fill="#000">BD.</text><text x="952" y="657" font-size="3.6" font-style="italic" font-weight="bold" text-anchor="start" fill="#000">PLY</text><text x="672" y="710" font-family="DejaVu Sans,sans-serif" font-weight="200" font-size="13" textLength="99" lengthAdjust="spacingAndGlyphs" fill="#000" stroke="#000" stroke-width=".3">EAST ELEVATION</text><polygon points="1139.4,569.4 1163.8,569.4 1163.8,580.7 1160,580.7" fill="url(#br)" stroke="none" stroke-width="1" /><rect x="1146.2" y="563.3" width="10.20" height="5.70" fill="#fff" stroke="#000" stroke-width="1" /><polygon points="1099.8,563.7 1200,597.7 1008.7,597.7" fill="url(#mh)" stroke="none" stroke-width="1" /><polygon points="994.6,596.5 1099.8,558.8 1211.5,597.8 1211.5,601.3 1209.4,601.5 1099.8,563.7 996,601.5" fill="#fff" stroke="#000" stroke-width="1" /><line x1="1099.8" y1="558.8" x2="1099.8" y2="563.7" stroke="#000" stroke-width="1" /><polygon points="1201.3,603 1260.6,624.5 1258.5,628.5 1201.3,608.3" fill="#fff" stroke="#000" stroke-width="1" /><line x1="1008.7" y1="597.7" x2="1008.7" y2="688" stroke="#000" stroke-width="1" /><line x1="1200.5" y1="597.7" x2="1200.5" y2="651" stroke="#000" stroke-width="1" /><line x1="1008.7" y1="598.5" x2="1200.5" y2="598.5" stroke="#000" stroke-width="1" /><line x1="1008.7" y1="623.7" x2="1200.5" y2="623.7" stroke="#000" stroke-width="1" /><line x1="1008.7" y1="626.4" x2="1200.5" y2="626.4" stroke="#000" stroke-width="1" /><rect x="1057.3" y="600.4" width="17.20" height="21.50" fill="#fff" stroke="#00ffff" stroke-width="2" /><line x1="1064.8" y1="600.4" x2="1064.8" y2="621.9" stroke="#00ffff" stroke-width="2" /><rect x="1090.8" y="600.4" width="16.50" height="21.50" fill="#fff" stroke="#00ffff" stroke-width="2" /><line x1="1098.7" y1="600.4" x2="1098.7" y2="621.9" stroke="#00ffff" stroke-width="2" /><rect x="1147.3" y="600.4" width="33.30" height="21.50" fill="#fff" stroke="#00ffff" stroke-width="2" /><line x1="1164.3" y1="600.4" x2="1164.3" y2="621.9" stroke="#00ffff" stroke-width="2" /><rect x="1009.5" y="627.1" width="191.00" height="44.10" fill="url(#mv)" stroke="none" stroke-width="0" /><rect x="1183.5" y="650.8" width="17.50" height="21.20" fill="#fff" stroke="none" stroke-width="0" /><rect x="1007.1" y="671.2" width="90.50" height="17.40" fill="url(#br)" stroke="none" stroke-width="0" /><rect x="1081" y="650.8" width="16.60" height="20.40" fill="url(#br)" stroke="none" stroke-width="0" /><polygon points="1183.5,651.5 1216.4,651.5 1216.4,675.2 1212.6,675.2 1212.6,679 1207.2,679 1207.2,682.2 1201.8,682.2 1201.8,685.5 1196.4,685.5 1196.4,688.6 1183.5,688.6" fill="url(#br)" stroke="none" stroke-width="1" /><rect x="1200.5" y="645.6" width="43.90" height="15.90" fill="#ff0000" stroke="none" stroke-width="0" /><rect x="1201" y="626.5" width="2.00" height="19.10" fill="#ff00ff" stroke="none" stroke-width="0" /><line x1="1200.5" y1="626.2" x2="1245" y2="626.2" stroke="#000" stroke-width="1" /><rect x="1097.6" y="647.9" width="85.90" height="40.30" fill="url(#mv)" stroke="#000" stroke-width="1.2" /><rect x="1058.4" y="647.4" width="21.10" height="10.70" fill="#fff" stroke="#00ffff" stroke-width="2" /><line x1="1068.8" y1="647.4" x2="1068.8" y2="658.1" stroke="#00ffff" stroke-width="2" /><rect x="1203.2" y="626.4" width="34.10" height="18.80" fill="#fff" stroke="#00ffff" stroke-width="1.3" /><line x1="1210.2" y1="626.4" x2="1210.2" y2="645.2" stroke="#00ffff" stroke-width="1.3" /><line x1="1231" y1="626.4" x2="1231" y2="645.2" stroke="#00ffff" stroke-width="1.3" /><line x1="1244.5" y1="621.8" x2="1244.5" y2="662" stroke="#000" stroke-width="1" /><line x1="1246.5" y1="621.8" x2="1246.5" y2="662" stroke="#000" stroke-width="1" /><line x1="1216.3" y1="662.1" x2="1235.1" y2="662.1" stroke="#000" stroke-width="1" /><line x1="1216.3" y1="665.5" x2="1235.1" y2="665.5" stroke="#000" stroke-width="1" /><line x1="1216.3" y1="669" x2="1235.1" y2="669" stroke="#000" stroke-width="1" /><line x1="1216.3" y1="672.3" x2="1235.1" y2="672.3" stroke="#000" stroke-width="1" /><line x1="1216.3" y1="675.7" x2="1235.1" y2="675.7" stroke="#000" stroke-width="1" /><line x1="1235.1" y1="662.1" x2="1235.1" y2="675.7" stroke="#000" stroke-width="1" /><line x1="1235" y1="662.1" x2="1268.3" y2="662.1" stroke="#000" stroke-width="1" /><text x="999" y="570.5" font-size="3.8" font-style="italic" font-weight="bold" text-anchor="start" fill="#000" textLength="49" lengthAdjust="spacingAndGlyphs">2" X 10" HORZ. SIDING</text><line x1="1049" y1="569.5" x2="1056" y2="571" stroke="#000" stroke-width="1" /><line x1="1056" y1="571" x2="1073" y2="588" stroke="#000" stroke-width="1" /><text x="962" y="619.5" font-size="3.6" font-style="italic" font-weight="bold" text-anchor="start" fill="#000" textLength="37" lengthAdjust="spacingAndGlyphs">EXTERIOR STUCCO</text><polyline points="1001,617.5 1015,617.5 1015,619" stroke="#000" stroke-width="1" fill="none" /><text x="952.5" y="648" font-size="3.6" font-style="italic" font-weight="bold" text-anchor="start" fill="#000" textLength="34" lengthAdjust="spacingAndGlyphs">2 X 4" BATN @8"</text><text x="952.5" y="652.5" font-size="3.6" font-style="italic" font-weight="bold" text-anchor="start" fill="#000" textLength="39" lengthAdjust="spacingAndGlyphs">BD. OVER REDWOOD</text><text x="952.5" y="657" font-size="3.6" font-style="italic" font-weight="bold" text-anchor="start" fill="#000">PLY</text><line x1="993" y1="649.5" x2="1014" y2="649.5" stroke="#000" stroke-width="1" /><text x="968" y="686" font-size="3.6" font-style="italic" font-weight="bold" text-anchor="start" fill="#000" textLength="13" lengthAdjust="spacingAndGlyphs">GRADE</text><text x="1214" y="689" font-size="3.6" font-style="italic" font-weight="bold" text-anchor="start" fill="#000" textLength="42" lengthAdjust="spacingAndGlyphs">USED BRICK VENEER</text><polyline points="1198.5,673 1198.5,687.5 1211,687.5" stroke="#000" stroke-width="1" fill="none" /><text x="1037.6" y="710" font-family="DejaVu Sans,sans-serif" font-weight="200" font-size="13" textLength="107.4" lengthAdjust="spacingAndGlyphs" fill="#000" stroke="#000" stroke-width=".3">NORTH ELEVATION</text></svg>
<div style="left:0px;top:44px;width:1680px;height:57px;background:#4a4a4a"></div>
<div class="tb" style="left:0px;top:44.5px;width:1167px;height:27px;border-radius:6px 0 0 0"></div>
<div class="tb" style="left:1173px;top:44.5px;width:421px;height:27px;border-radius:6px 5px 0 0"></div>
<div class="tb" style="left:0px;top:72.5px;width:1665px;height:27px;border-radius:6px 5px 0 0"></div>
<div style="left:0px;top:71.5px;width:1665px;height:1px;background:#6d7179"></div>
<div style="left:0px;top:100px;width:1680px;height:1px;background:#5b5f66"></div>
<div style="left:490px;top:46px;width:1px;height:26px;background:rgba(90,95,105,.45)"></div>
<div style="left:491px;top:46px;width:1px;height:26px;background:rgba(255,255,255,.3)"></div>
<div style="left:489px;top:45px;width:4px;height:2px;background:#4a4a4a;border-radius:0 0 2px 2px"></div>
<div style="left:489px;top:70px;width:4px;height:2px;background:#5a5d64;border-radius:2px 2px 0 0"></div>
<div style="left:785px;top:46px;width:1px;height:26px;background:rgba(90,95,105,.45)"></div>
<div style="left:786px;top:46px;width:1px;height:26px;background:rgba(255,255,255,.3)"></div>
<div style="left:784px;top:45px;width:4px;height:2px;background:#4a4a4a;border-radius:0 0 2px 2px"></div>
<div style="left:784px;top:70px;width:4px;height:2px;background:#5a5d64;border-radius:2px 2px 0 0"></div>
<div style="left:939px;top:46px;width:1px;height:26px;background:rgba(90,95,105,.45)"></div>
<div style="left:940px;top:46px;width:1px;height:26px;background:rgba(255,255,255,.3)"></div>
<div style="left:938px;top:45px;width:4px;height:2px;background:#4a4a4a;border-radius:0 0 2px 2px"></div>
<div style="left:938px;top:70px;width:4px;height:2px;background:#5a5d64;border-radius:2px 2px 0 0"></div>
<div style="left:1009px;top:46px;width:1px;height:26px;background:rgba(90,95,105,.45)"></div>
<div style="left:1010px;top:46px;width:1px;height:26px;background:rgba(255,255,255,.3)"></div>
<div style="left:1008px;top:45px;width:4px;height:2px;background:#4a4a4a;border-radius:0 0 2px 2px"></div>
<div style="left:1008px;top:70px;width:4px;height:2px;background:#5a5d64;border-radius:2px 2px 0 0"></div>
<div style="left:685px;top:74px;width:1px;height:26px;background:rgba(90,95,105,.45)"></div>
<div style="left:686px;top:74px;width:1px;height:26px;background:rgba(255,255,255,.3)"></div>
<div style="left:684px;top:73px;width:4px;height:2px;background:#55585f;border-radius:0 0 2px 2px"></div>
<div style="left:684px;top:98px;width:4px;height:2px;background:#5a5d64;border-radius:2px 2px 0 0"></div>
<div style="left:986px;top:74px;width:1px;height:26px;background:rgba(90,95,105,.45)"></div>
<div style="left:987px;top:74px;width:1px;height:26px;background:rgba(255,255,255,.3)"></div>
<div style="left:985px;top:73px;width:4px;height:2px;background:#55585f;border-radius:0 0 2px 2px"></div>
<div style="left:985px;top:98px;width:4px;height:2px;background:#5a5d64;border-radius:2px 2px 0 0"></div>
<div style="left:1201px;top:74px;width:1px;height:26px;background:rgba(90,95,105,.45)"></div>
<div style="left:1202px;top:74px;width:1px;height:26px;background:rgba(255,255,255,.3)"></div>
<div style="left:1200px;top:73px;width:4px;height:2px;background:#55585f;border-radius:0 0 2px 2px"></div>
<div style="left:1200px;top:98px;width:4px;height:2px;background:#5a5d64;border-radius:2px 2px 0 0"></div>
<div class="grip" style="left:12px;top:51px;width:3px;height:15px;"></div>
<div class="sep" style="left:90px;top:52px;width:2px;height:15px;"></div>
<div class="sep" style="left:401px;top:52px;width:2px;height:15px;"></div>
<div class="sep" style="left:457px;top:52px;width:2px;height:15px;"></div>
<div class="grip" style="left:502px;top:51px;width:3px;height:15px;"></div>
<div class="sep" style="left:534px;top:52px;width:2px;height:15px;"></div>
<div class="combo" style="left:541px;top:50px;width:98px;height:20px;background:#f3f3f4"><div class="t" style="left:3.3px;top:3.5px;font-size:12.4px;color:#8d8f9a;letter-spacing:-1.299px">ROMAND-1</div><div class="arr" style="left:86px;top:7.0px"></div></div>
<div class="sep" style="left:642px;top:52px;width:2px;height:15px;"></div>
<div class="sep" style="left:675px;top:52px;width:2px;height:15px;"></div>
<div class="combo" style="left:682px;top:50px;width:99px;height:20px;background:#f3f3f4"><div class="t" style="left:3.7px;top:3.5px;font-size:12.4px;color:#8d8f9a;letter-spacing:-1.112px">Standard</div><div class="arr" style="left:87px;top:7.0px"></div></div>
<div class="grip" style="left:797px;top:51px;width:3px;height:15px;"></div>
<div class="sep" style="left:852px;top:52px;width:2px;height:15px;"></div>
<div class="sep" style="left:884px;top:52px;width:2px;height:15px;"></div>
<div class="grip" style="left:952px;top:51px;width:3px;height:15px;"></div>
<div class="grip" style="left:1020px;top:51px;width:3px;height:15px;"></div>
<div class="grip" style="left:1185px;top:51px;width:3px;height:15px;"></div>
<div class="sep" style="left:1217px;top:52px;width:2px;height:15px;"></div>
<div class="sep" style="left:1249px;top:52px;width:2px;height:15px;"></div>
<div class="sep" style="left:1327px;top:52px;width:2px;height:15px;"></div>
<div class="sep" style="left:1405px;top:52px;width:2px;height:15px;"></div>
<div class="sep" style="left:1506px;top:52px;width:2px;height:15px;"></div>
<div style="left:1535px;top:48px;width:23px;height:23px;background:linear-gradient(#fbd9a0,#f5b85c 50%,#f0a030);border:1px solid #d8a860;border-radius:2px"></div>
<div class="sep" style="left:1561px;top:52px;width:2px;height:15px;"></div>
<div class="grip" style="left:12px;top:80px;width:3px;height:15px;"></div>
<div class="sep" style="left:67px;top:80px;width:2px;height:15px;"></div>
<div class="combo" style="left:74px;top:77.7px;width:200px;height:21px;background:#fff"></div>
<div class="combo" style="left:300px;top:77.7px;width:171px;height:21px;background:#fff"><div class="t" style="left:60.5px;top:4.0px;font-size:12.4px;color:#363b50;letter-spacing:-1.164px">BYLAYER</div><div class="arr" style="left:159px;top:7.5px"></div><div style="left:3px;top:3px;width:54px;height:13px;background:#3c464c;border:1px solid #222"></div></div>
<div style="left:452px;top:80px;width:1px;height:17px;background:#e3e3e3"></div>
<div class="sep" style="left:475px;top:81px;width:2px;height:15px;"></div>
<div class="combo" style="left:482px;top:77.7px;width:198px;height:21px;background:#fff"><div class="t" style="left:94px;top:4.0px;font-size:12.4px;color:#1c1c2c;letter-spacing:-1.079px">BYLAYER</div><div class="arr" style="left:186px;top:7.5px"></div><div style="left:4px;top:9px;width:83px;height:1px;background:#000"></div></div>
<div style="left:661px;top:80px;width:1px;height:17px;background:#e3e3e3"></div>
<div class="grip" style="left:697px;top:80px;width:3px;height:15px;"></div>
<div class="combo" style="left:704px;top:77.7px;width:168px;height:21px;background:#fff"><div class="t" style="left:88px;top:4.0px;font-size:12.4px;color:#1c1c2c;letter-spacing:-1.121px">BYLAYER</div><div class="arr" style="left:156px;top:7.5px"></div><div style="left:4px;top:9px;width:79px;height:1px;background:#000"></div></div>
<div style="left:853px;top:80px;width:1px;height:17px;background:#e3e3e3"></div>
<div class="sep" style="left:877px;top:81px;width:2px;height:15px;"></div>
<div class="combo" style="left:883px;top:77.7px;width:98px;height:21px;background:#f3f3f3"><div class="arr" style="left:86px;top:7.5px"></div><div style="left:2px;top:2px;width:76px;height:15px;background:#c9c9c9"></div><div class="t" style="left:5px;top:3.500px;font-size:12.400px;color:#8a8a8a;letter-spacing:-1.513px">BYCOLOR</div></div>
<div class="grip" style="left:998px;top:80px;width:3px;height:15px;"></div>
<div class="sep" style="left:1030px;top:80px;width:2px;height:15px;"></div>
<div class="grip" style="left:1215px;top:80px;width:3px;height:15px;"></div>
<div class="sep" style="left:1291px;top:80px;width:2px;height:15px;"></div>
<div class="sep" style="left:1485px;top:80px;width:2px;height:15px;"></div>
<div class="sep" style="left:1541px;top:80px;width:2px;height:15px;"></div>
<div style="left:305px;top:100px;width:1346px;height:21px;background:linear-gradient(#8f97a5 0,#a2a9b6 15%,#c3c7cf 100%)"></div>
<div style="left:305px;top:120.5px;width:1346px;height:1.5px;background:#f6f7f9"></div>
<svg style="position:absolute;left:305px;top:101px" width="1346" height="20" viewBox="305 101 1346 20"><defs><linearGradient id="tg" x1="0" y1="0" x2="0" y2="1"><stop offset="0" stop-color="#d3d6dc"/><stop offset=".45" stop-color="#c6cad1"/><stop offset=".52" stop-color="#a4abb7"/><stop offset="1" stop-color="#99a0ad"/></linearGradient></defs><path d="M324 120.500L338 105Q340 102.500 343 102.500L434 102.500Q437 102.500 437 105.500L437 120.500Z" fill="url(#tg)" stroke="#8f95a0" stroke-width="1"/><path d="M326 120.500L339 106Q341 103.500 343 103.500L434 103.500" fill="none" stroke="#eef0f3" stroke-width="1"/><path d="M437.5 120.500L437.5 107L441.5 102.500L677 102.500Q680 102.500 680 105.500L680 120.500Z" fill="url(#tg)" stroke="#8f95a0" stroke-width="1"/><path d="M438.5 120.500L438.5 107.500L442 103.500L677 103.500" fill="none" stroke="#eef0f3" stroke-width="1"/><path d="M680.5 120.500L680.5 107L684.5 102.500L779 102.500Q782 102.500 782 105.500L782 120.500Z" fill="url(#tg)" stroke="#8f95a0" stroke-width="1"/><path d="M681.5 120.500L681.5 107.500L685 103.500L779 103.500" fill="none" stroke="#eef0f3" stroke-width="1"/><path d="M782.5 120.500L782.5 107L786.5 102.500L1011 102.500Q1014 102.500 1014 105.500L1014 120.500Z" fill="url(#tg)" stroke="#8f95a0" stroke-width="1"/><path d="M783.5 120.500L783.5 107.500L787 103.500L1011 103.500" fill="none" stroke="#eef0f3" stroke-width="1"/><path d="M995 121L1012 104Q1014 102.500 1017 102.500L1211 102.500Q1214 102.500 1214 105.500L1214 121Z" fill="#fff" stroke="#8f95a0" stroke-width="1"/><path d="M1633.500 106.500l6 4.500-6 4.500z" fill="none" stroke="#5a5f68" stroke-width="1"/></svg>
<div class="t" style="left:351px;top:105.5px;font-size:11.5px;letter-spacing:-0.061px;color:#1b1b1b">Rysunek1.dwg</div>
<div class="t" style="left:454px;top:105.5px;font-size:11.5px;letter-spacing:0.077px;color:#1b1b1b">Iso hatch patterns (tylko do przeglądania)</div>
<div class="t" style="left:696.5px;top:105.5px;font-size:11.5px;letter-spacing:-0.12px;color:#1b1b1b">Rysunek2.dwg</div>
<div class="t" style="left:799.5px;top:105.5px;font-size:11.5px;letter-spacing:0.052px;color:#1b1b1b">Hatch patterns (tylko do przeglądania)</div>
<div class="t" style="left:1024.5px;top:105.5px;font-size:11.5px;letter-spacing:0.113px;color:#000;text-shadow:.4px 0 0 #000">Ar house 1 (tylko do przeglądania)</div>
<div style="left:1648px;top:121px;width:2px;height:786px;background:#f4f4f4"></div>
<div style="left:1650px;top:101px;width:2px;height:870px;background:#555"></div>
<div style="left:307px;top:885px;width:1341px;height:18px;background:#f0f0f0"></div>
<div style="left:307px;top:902.5px;width:1343px;height:3.5px;background:#fff"></div>
<div style="left:305px;top:906px;width:1346px;height:4px;background:#6b6b6b"></div>
<svg style="position:absolute;left:307px;top:885px" width="200" height="21" viewBox="307 885 200 21"><rect x="307.5" y="886.500" width="14" height="13.500" fill="#f5f5f5" stroke="none"/><path d="M307.5 900.500h14.500v-14" fill="none" stroke="#c4c4c4"/><rect x="323" y="886.500" width="14" height="13.500" fill="#f5f5f5" stroke="none"/><path d="M323 900.500h14.500v-14" fill="none" stroke="#c4c4c4"/><rect x="339" y="886.500" width="14" height="13.500" fill="#f5f5f5" stroke="none"/><path d="M339 900.500h14.500v-14" fill="none" stroke="#c4c4c4"/><rect x="355" y="886.500" width="14" height="13.500" fill="#f5f5f5" stroke="none"/><path d="M355 900.500h14.500v-14" fill="none" stroke="#c4c4c4"/><path d="M311.500 888.500v9.500" stroke="#000" stroke-width="1.500"/><path d="M318.500 888.500v9.500l-5.500-4.750z" fill="#000"/><path d="M333.500 888.500v9.500l-5.500-4.750z" fill="#000"/><path d="M343.500 888.500v9.500l5.500-4.750z" fill="#000"/><path d="M358.500 888.500v9.500l5.500-4.750z" fill="#000"/><path d="M365.500 888.500v9.500" stroke="#000" stroke-width="1.500"/><path d="M372 886l6.600 15.500h39.300l3.500-8" fill="none" stroke="#000" stroke-width="1"/><path d="M419 886l7.800 15.500h50.600l7.600-15.500z" fill="#fff" stroke="none"/><path d="M419 886l7.800 15.500h50.600l7.600-15.500" fill="none" stroke="#000" stroke-width="1"/></svg>
<div class="t" style="left:384.3px;top:888.5px;font-size:11.5px;letter-spacing:-0.706px;color:#16163a">Model</div>
<div class="t" style="left:431px;top:888px;font-weight:bold;font-size:12px;letter-spacing:-0.743px;color:#000">Layout 1</div>
<div style="left:305px;top:910px;width:15px;height:60px;background:#a3a3a3"></div>
<div style="left:307px;top:912px;width:10px;height:3px;background:repeating-linear-gradient(90deg,#444 0 1px,transparent 1px 2px)"></div>
<div style="left:320px;top:910px;width:1330px;height:42px;background:#f0f0f0"></div>
<div style="left:320px;top:952px;width:1330px;height:1px;background:#555"></div>
<div style="left:320px;top:953px;width:1331px;height:17px;background:#fff;border-radius:0 0 3px 0"></div>
<div style="left:1632px;top:910px;width:16px;height:42px;background:#f3f3f3;border-left:1px solid #e6e6e6"></div>
<svg style="position:absolute;left:1632px;top:910px" width="16" height="42"><path d="M4.500 11.500l3.500-3.500 3.500 3.500z" fill="#444"/><path d="M4.500 32l3.500 3.500 3.500-3.500z" fill="#444"/></svg>
<div class="t" style="left:322.5px;top:910.5px;font-family:'Liberation Mono',monospace;font-size:11.7px;letter-spacing:-.02px;color:#000">Anulowano</div>
<div class="t" style="left:322.5px;top:922.5px;font-family:'Liberation Mono',monospace;font-size:11.7px;letter-spacing:-.02px;color:#000">Anulowano</div>
<div class="t" style="left:322.5px;top:934.5px;font-family:'Liberation Mono',monospace;font-size:11.7px;letter-spacing:-.02px;color:#000">Polecenie:&nbsp; _POLYGON</div>
<div class="t" style="left:324px;top:957.5px;font-family:'Liberation Mono',monospace;font-size:11.7px;color:#000;text-shadow:.3px 0 0 #000">Wielobok: Wielokrotnie/Szerokość linii/&lt;Ilość stron&gt; &lt;4&gt;:</div>
<div style="left:0px;top:100px;width:300px;height:868px;background:#f0f0f0"></div>
<div style="left:0px;top:99.5px;width:300px;height:21.5px;background:linear-gradient(#a8a8a8,#a1a1a1 60%,#9b9b9b);border-radius:5px 0 0 0"></div>
<div style="left:0px;top:121px;width:300px;height:1.5px;background:#fdfdfd"></div>
<div style="left:2px;top:103px;width:4px;height:16px;background:repeating-linear-gradient(#333 0 1px,transparent 1px 2px),repeating-linear-gradient(90deg,#333 0 1px,transparent 1px 2px);background-blend-mode:multiply;opacity:.75"></div>
<div class="t" style="left:12px;top:104.5px;font-weight:bold;font-size:13.5px;letter-spacing:0.48px;color:#000">W łasność</div>
<div style="left:300px;top:100px;width:5px;height:870px;background:#6e6e6e"></div>
<div style="left:304px;top:101px;width:3px;height:868px;background:linear-gradient(90deg,#8a8a8a 0 1px,#ededed 1px 3px)"></div>
<div style="left:16px;top:135px;width:270px;height:20px;background:linear-gradient(#fff,#f2f2f2 50%,#e2e2e2);border:1px solid #8e8f8f;border-radius:3px"></div>
<div class="t" style="left:19.5px;top:139.5px;font-size:11px;letter-spacing:-0.131px;">Brak wyboru</div>
<div class="cat" style="top:163px"><span>Ogólne</span></div>
<div class="row" style="top:181px"><i>Kolor</i><b><u></u></b></div>
<div class="row" style="top:199px"><i>Warstwa</i><b><u></u></b></div>
<div class="row" style="top:217px"><i>Rodzaj linii</i><b><u></u></b></div>
<div class="row" style="top:235px"><i>Skala rodzaju linii</i><b><u></u></b></div>
<div class="row" style="top:253px"><i>Szerokość linii</i><b><u></u></b></div>
<div class="row" style="top:271px"><i>Grubość</i><b><u></u></b></div>
<div class="row" style="top:289px"><i>Przezroczystość</i><b><u></u></b></div>
<div class="cat" style="top:311px"><span>Wizualizacji 3D</span></div>
<div class="row" style="top:329px"><i>Materiał</i><b><u></u></b></div>
<div class="row" style="top:347px"><i>Wyświetlanie cieni</i><b><u></u></b></div>
<div class="cat" style="top:369px"><span>Styl wydruku</span></div>
<div class="row" style="top:387px"><i>Styl druku</i><b><u></u></b></div>
<div class="row" style="top:405px"><i>Tabelka stylów wydruku</i><b><u>Nic</u></b></div>
<div class="row" style="top:423px"><i>Tabelka wydruku dołąc...</i><b><u>Model</u></b></div>
<div class="row" style="top:441px"><i>Rodzaj tabelki wydruku</i><b><u>Styl wydruku zależny od...</u></b></div>
<div class="cat" style="top:463px"><span>Widok</span></div>
<div class="row" style="top:481px"><i>Środek X</i><b><u>1'-5 9/16"</u></b></div>
<div class="row" style="top:499px"><i>Środek Y</i><b><u>1'-0"</u></b></div>
<div class="row" style="top:517px"><i>Środek Z</i><b><u>0"</u></b></div>
<div class="row" style="top:535px"><i>Szerokość</i><b><u>3'-10 1/2"</u></b></div>
<div class="row" style="top:553px"><i>Wysokość</i><b><u>2'-2 1/2"</u></b></div>
<div class="cat" style="top:575px"><span>Różne</span></div>
<div class="row" style="top:593px"><i>Skala przypisu</i><b><u>1:1</u></b></div>
<div class="row" style="top:611px"><i>Ikona LUW włączona</i><b style="background:#fff"><u>Tak</u></b></div>
<div class="row" style="top:629px"><i>Ikona LUW w początku</i><b style="background:#fff"><u>Nie</u></b></div>
<div class="row" style="top:647px"><i>LUW rzutni</i><b style="background:#fff"><u>Tak</u></b></div>
<div class="row" style="top:665px"><i>Nazwa LUW</i><b><u></u></b></div>
<div class="row" style="top:683px"><i>Styl wizualny</i><b><u>Model szkieletowy 2D</u></b></div>
<div class="row" style="top:701px"><i>Ustawienie PICKADD</i><b style="background:#fff"><u>Tak</u></b></div>
<div class="row" style="top:719px"><i>Ustawienie PICKAUTO</i><b style="background:#fff"><u>Tak</u></b></div>
<div class="row" style="top:737px"><i>Ustawienie PICKBOX</i><b style="background:#fff"><u>3</u></b></div>
<div class="row" style="top:755px"><i>Ustawienie PICKDRAG</i><b style="background:#fff"><u>Nie</u></b></div>
<div class="row" style="top:773px"><i>Ustawienie PICKFIRST</i><b style="background:#fff"><u>Tak</u></b></div>
<div class="row" style="top:791px"><i>Globalna skala rodzajó...</i><b style="background:#fff"><u>1.0000</u></b></div>
<div class="row" style="top:809px"><i>Rozmiar kursora</i><b style="background:#fff"><u>5</u></b></div>
<div class="row" style="top:827px"><i>Wypełnij obszar</i><b style="background:#fff"><u>Tak</u></b></div>
<div class="row" style="top:845px"><i>Ilość miejsc dziesiętnych</i><b style="background:#fff"><u>4</u></b></div>
<div class="row" style="top:863px"><i>Odzwierciedlenie tekstu</i><b style="background:#fff"><u>Tak</u></b></div>
<div style="left:1652px;top:100px;width:28px;height:395px;background:linear-gradient(90deg,#c9ccd3 0%,#bfc3cb 45%,#a0a6b1 100%);border-radius:5px 0 0 3px"></div>
<div style="left:1660px;top:112px;width:14px;height:2px;background:repeating-linear-gradient(90deg,#222 0 2px,transparent 2px 4px);box-shadow:1px 1px 0 rgba(255,255,255,.7)"></div>
<div style="left:1651px;top:530px;width:28px;height:66px;background:linear-gradient(90deg,#c9ccd3 0%,#bfc3cb 45%,#a0a6b1 100%);border-radius:5px"></div>
<div style="left:1659px;top:543px;width:14px;height:2px;background:repeating-linear-gradient(90deg,#222 0 2px,transparent 2px 4px)"></div>
<div style="left:1651px;top:631px;width:28px;height:141px;background:linear-gradient(90deg,#c9ccd3 0%,#bfc3cb 45%,#a0a6b1 100%);border-radius:5px"></div>
<div style="left:1659px;top:644px;width:14px;height:2px;background:repeating-linear-gradient(90deg,#222 0 2px,transparent 2px 4px)"></div>
<div style="left:1660px;top:719px;width:15px;height:1px;background:#444;box-shadow:0 1px 0 #eee"></div>
<div style="left:0px;top:968px;width:305px;height:2px;background:#e9e9e9"></div>
<div class="tb" style="left:0px;top:971px;width:966px;height:27px;border-radius:5px 0 0 0"></div>
<div class="grip" style="left:11px;top:978px;width:3px;height:15px;"></div>
<div class="sep" style="left:44px;top:979px;width:2px;height:15px;"></div>
<div class="sep" style="left:122px;top:979px;width:2px;height:15px;"></div>
<div class="sep" style="left:223px;top:979px;width:2px;height:15px;"></div>
<div class="sep" style="left:255px;top:979px;width:2px;height:15px;"></div>
<div class="sep" style="left:310px;top:979px;width:2px;height:15px;"></div>
<div class="sep" style="left:365px;top:979px;width:2px;height:15px;"></div>
<div class="sep" style="left:420px;top:979px;width:2px;height:15px;"></div>
<div class="sep" style="left:475px;top:979px;width:2px;height:15px;"></div>
<div style="left:531px;top:971px;width:2px;height:26px;background:#4a4a4a"></div>
<div style="left:529px;top:970px;width:6px;height:2px;background:#4a4a4a"></div>
<div style="left:529px;top:996px;width:6px;height:2px;background:#4a4a4a"></div>
<div style="left:626px;top:971px;width:2px;height:26px;background:#4a4a4a"></div>
<div style="left:624px;top:970px;width:6px;height:2px;background:#4a4a4a"></div>
<div style="left:624px;top:996px;width:6px;height:2px;background:#4a4a4a"></div>
<div class="grip" style="left:545px;top:978px;width:3px;height:15px;"></div>
<div class="grip" style="left:639px;top:978px;width:3px;height:15px;"></div>
<div class="sep" style="left:832px;top:979px;width:2px;height:15px;"></div>
<div class="sep" style="left:887px;top:979px;width:2px;height:15px;"></div>
<div class="tb" style="left:1276px;top:971px;width:114px;height:27px;"></div>
<div class="grip" style="left:1287px;top:978px;width:3px;height:15px;"></div>
<div style="left:0px;top:997px;width:1680px;height:23px;background:linear-gradient(#565a60 0,#3a3c40 3px,#2b2b2c 6px,#282828 100%)"></div>
<div class="t" style="left:4px;top:1004.5px;font-size:11.5px;letter-spacing:-0.224px;color:#fff">Ustawia rzutnie na modelu szkieletowym 2D: PRZERYS</div>
<div style="left:10px;top:1017px;width:32px;height:10px;background:#b8c4d4;border-radius:16px 16px 0 0;opacity:.8"></div>
<div class="sd" style="left:1171px;top:1001px;width:2px;height:17px;"></div>
<div class="sd" style="left:1181px;top:1001px;width:2px;height:17px;"></div>
<div class="sd" style="left:1309px;top:1001px;width:2px;height:17px;"></div>
<div class="sd" style="left:1342px;top:1001px;width:2px;height:17px;"></div>
<div class="sd" style="left:1381px;top:1001px;width:2px;height:17px;"></div>
<div class="sd" style="left:1417px;top:1001px;width:2px;height:17px;"></div>
<div class="sd" style="left:1463px;top:1001px;width:2px;height:17px;"></div>
<div class="sd" style="left:1513px;top:1001px;width:2px;height:17px;"></div>
<div class="sd" style="left:1573px;top:1001px;width:2px;height:17px;"></div>
<div class="sd" style="left:1601px;top:1001px;width:2px;height:17px;"></div>
<div class="sd" style="left:1657px;top:1001px;width:2px;height:17px;"></div>
<div class="t" style="left:1185px;top:1004.5px;font-size:11.5px;letter-spacing:-0.026px;color:#fff">0'-6 3/4",2'-1",0"</div>
<div class="t" style="left:1312.5px;top:1004.5px;font-size:11.5px;letter-spacing:-1.242px;color:#7b7b7b">SKOK</div>
<div class="t" style="left:1345.5px;top:1004.5px;font-size:11.5px;letter-spacing:-1.01px;color:#7b7b7b">SIATKA</div>
<div class="t" style="left:1385px;top:1004.5px;font-size:11.5px;letter-spacing:-0.828px;color:#fff">ORTO</div>
<div class="t" style="left:1421.5px;top:1004.5px;font-size:11.5px;letter-spacing:-0.899px;color:#7b7b7b">BIEGUN</div>
<div class="t" style="left:1467px;top:1004.5px;font-size:11.5px;letter-spacing:-1.278px;color:#7b7b7b">UCHWYT</div>
<div class="t" style="left:1517px;top:1004.5px;font-size:11.5px;letter-spacing:-1.125px;color:#fff">ŚLEDZENIE</div>
<div class="t" style="left:1577px;top:1004.5px;font-size:11.5px;letter-spacing:-1.307px;color:#7b7b7b">WSL</div>
<div class="t" style="left:1605px;top:1004.5px;font-size:11.5px;letter-spacing:-0.533px;color:#fff">P:Layout1</div>
<div style="left:1661px;top:1002px;width:16px;height:16px;background:radial-gradient(circle at 40% 35%,#7fe07f,#2fa03f 60%,#1a7a2a);border-radius:4px;border:1px solid #9fd8a0"></div>
<svg style="position:absolute;left:1661px;top:1002px" width="16" height="16"><path d="M4 8l3 3.500 5.500-7" stroke="#fff" stroke-width="2" fill="none"/></svg>
<div style="left:322px;top:237px;width:52.5px;height:48px;background:#a1a1a1;border:1px solid #9c9c9c;box-shadow:inset 0 0 0 1.5px #d2d2d2"></div>
<div style="left:324px;top:257px;width:48px;height:26px;background:linear-gradient(#cfd2d8,#c0c4cc 50%,#a6abb5)"></div>
<div class="t" style="left:331px;top:242px;font-weight:bold;font-size:11px;color:#3f4754">dLi...</div>
<svg style="position:absolute;left:360px;top:242px" width="11" height="11"><path d="M1.500 1.500l8 8M9.500 1.500l-8 8" stroke="#4a4a4a" stroke-width="1"/></svg>
<div style="left:1002px;top:835px;width:412px;height:50px;background:#a1a1a1;border:1px solid #9c9c9c;box-shadow:inset 0 0 0 1.5px #d2d2d2"></div>
<div style="left:1005px;top:856px;width:406px;height:26px;background:linear-gradient(#cfd2d8,#c0c4cc 50%,#a6abb5)"></div>
<div class="t" style="left:1006px;top:841px;font-weight:bold;font-size:12px;letter-spacing:-0.641px;color:#3f4754">Powierzchnia</div>
<svg style="position:absolute;left:1398px;top:841px" width="11" height="11"><path d="M1.500 1.500l8 8M9.500 1.500l-8 8" stroke="#4a4a4a" stroke-width="1"/></svg>
<div class="sep" style="left:1062px;top:864px;width:2px;height:15px;"></div>
<div class="sep" style="left:1256px;top:864px;width:2px;height:15px;"></div>
<div class="sep" style="left:1311px;top:864px;width:2px;height:15px;"></div>
<div style="left:1413px;top:833px;width:235px;height:50px;background:#a1a1a1;border:1px solid #9c9c9c;box-shadow:inset 0 0 0 1.5px #d2d2d2"></div>
<div style="left:1416px;top:854px;width:229px;height:26px;background:linear-gradient(#cfd2d8,#c0c4cc 50%,#a6abb5)"></div>
<div class="t" style="left:1418px;top:838.5px;font-weight:bold;font-size:12px;letter-spacing:-0.517px;color:#3f4754">Menedżer stanu warstwy</div>
<svg style="position:absolute;left:1631px;top:839px" width="11" height="11"><path d="M1.500 1.500l8 8M9.500 1.500l-8 8" stroke="#4a4a4a" stroke-width="1"/></svg>
<div class="sep" style="left:1544px;top:862px;width:2px;height:15px;"></div>
<div style="left:260px;top:464px;width:40px;height:507px;background:#a1a1a1;border:1px solid #9c9c9c;box-shadow:inset 0 0 0 1.5px #d2d2d2"></div>
<div style="left:262px;top:484px;width:36px;height:486px;background:linear-gradient(#cfd2d8 0%,#c3c7ce 45%,#a4a9b3 100%)"></div>
<div class="t" style="left:265px;top:469px;font-weight:bold;font-size:11px;color:#3f4754">R...</div>
<svg style="position:absolute;left:284px;top:469px" width="11" height="11"><path d="M1.500 1.500l8 8M9.500 1.500l-8 8" stroke="#333" stroke-width="1.200"/></svg>
<svg style="position:absolute;left:0;top:0" width="1680" height="1020"><g transform="translate(20.4,51.6) scale(1.08)"><path d="M4.5 2.5h9v11h-12v-8z" fill="#dfe9e4" stroke="#1d4d3a"/><path d="M1.5 5.5h3v-3" fill="none" stroke="#1d4d3a"/></g><g transform="translate(43.4,51.6) scale(1.08)"><path d="M1 4l5-2 8 3-1 9-6 1-4-8z" fill="#f0c24a" stroke="#b8862a" stroke-width=".8"/><path d="M6 5l7 2-1 7-5-7z" fill="#fbe08a"/></g><g transform="translate(66.4,51.6) scale(1.08)"><rect x="1.5" y="1.5" width="13" height="13" rx="1" fill="#5d9078" stroke="#1d4d3a"/><rect x="4" y="2" width="8" height="5" fill="#e8efe9"/><rect x="4.5" y="10" width="7" height="4.5" fill="#2e5d48"/><rect x="6" y="11" width="2" height="3" fill="#dde"/></g><g transform="translate(96.4,51.6) scale(1.08)"><path d="M4 6l2-4h6l-1 4z" fill="#f4f4f4" stroke="#1d4d3a" stroke-width=".8"/><path d="M1.5 7.5l3-1.5h9l1 2v4l-3 2h-9l-1-2z" fill="#c8d4cc" stroke="#1d4d3a" stroke-width=".8"/></g><g transform="translate(332.4,51.6) scale(1.08)"><line x1="1.5" y1="14.5" x2="6" y2="10" stroke="#d890b4" stroke-width="2"/><circle cx="9" cy="6.5" r="5.3" fill="#e4efe9" stroke="#7a8a82" stroke-width="1.3"/><circle cx="7.5" cy="5" r="2" fill="#fff" fill-opacity=".6"/><path d="M11 11.5h4M13 9.5v4M11 15h4" stroke="#123" stroke-width="1" fill="none"/></g><g transform="translate(355.4,51.6) scale(1.08)"><line x1="1.5" y1="14.5" x2="6" y2="10" stroke="#d890b4" stroke-width="2"/><circle cx="9" cy="6.5" r="5.3" fill="#d8e4de" stroke="#7a8a82" stroke-width="1.3"/><circle cx="7.5" cy="5" r="2" fill="#fff" fill-opacity=".6"/><rect x="6.5" y="4" width="5" height="5" fill="#6030a0" stroke="#222" stroke-width=".6" transform="rotate(20 9 6.5)"/><path d="M12 14l3 0 0-3z" fill="#111"/></g><g transform="translate(377.4,51.6) scale(1.08)"><line x1="1.5" y1="14.5" x2="6" y2="10" stroke="#d890b4" stroke-width="2"/><circle cx="9" cy="6.5" r="5.3" fill="#cfe0d8" stroke="#7a8a82" stroke-width="1.3"/><circle cx="7.5" cy="5" r="2" fill="#fff" fill-opacity=".6"/><path d="M12 3h-5v3M7 3l5 5" stroke="#1d4d3a" stroke-width="1.6" fill="none"/></g><g transform="translate(409.9,51.6) scale(1.08)"><rect x="2" y="3" width="11" height="11" fill="#dfe8e3" stroke="#111" stroke-width="1.3"/><path d="M2 14l5.5-5.5L13 3z" fill="#9fb8ac"/><line x1="1" y1="15" x2="15" y2="1" stroke="#111" stroke-width="1.3"/><line x1="2" y1="14.5" x2="14.5" y2="2" stroke="#18c8c0" stroke-width=".7"/><path d="M13 15.5l2.500 0 0-2.500z" fill="#111"/></g><g transform="translate(433.4,51.6) scale(1.08)"><rect x="3" y="1" width="3" height="3" fill="#e02020"/><rect x="6" y="1" width="3" height="3" fill="#20c020"/><rect x="9" y="1" width="3" height="3" fill="#2040e0"/><rect x="12" y="1" width="3" height="3" fill="#e020e0"/><path d="M2 5h9l3 4-2 3h-7z" fill="#d9a0a0" stroke="#844" stroke-width=".6"/><path d="M2 10h6M5 10v5M3.500 15h3" stroke="#111" stroke-width="1.4" fill="none"/><path d="M10 11c3-1 3 2 1 2s-1 3 2 2" stroke="#2a7a5a" fill="none"/></g><g transform="translate(465.4,51.6) scale(1.08)"><rect x="1.5" y="1.500" width="13" height="13" rx="2" fill="#1e5c40" stroke="#0c2e20"/><text x="8" y="13" font-family="Liberation Sans,sans-serif" font-weight="bold" font-size="13" text-anchor="middle" fill="#fff">?</text></g><g transform="translate(508.9,51.6) scale(1.08)"><path d="M4 2h10M9 2v9" stroke="#111" stroke-width="1.6" fill="none"/><line x1="1.500" y1="14.500" x2="5" y2="11" stroke="#c8508c" stroke-width="2"/><circle cx="8" cy="8" r="4.800" fill="#b8d0c4" fill-opacity=".85" stroke="#666" stroke-width="1.200"/><path d="M8 3.500v9" stroke="#333" stroke-width="1.400"/></g><g transform="translate(651.4,51.6) scale(1.08)"><path d="M1 2v12M15 2v9" stroke="#111" stroke-width="1.300"/><path d="M1 4h14" stroke="#111"/><path d="M1 4l3-1.500v3zM15 4l-3-1.500v3z" fill="#111"/><path d="M2 14L13 4" stroke="#c8508c" stroke-width="1.500"/><path d="M5 6l6 1-3 4z" fill="#2a6a50"/></g><g transform="translate(805.4,51.6) scale(1.08)"><rect x="1.500" y="9.500" width="5" height="5" fill="#fff" stroke="#111"/><path d="M4 9l6-7 5 3-6 7z" fill="#e9f2ee" stroke="#111"/><path d="M8 5l3 1.500M7 7l3 1.500" stroke="#18c8c0"/></g><g transform="translate(828.4,51.6) scale(1.08)"><ellipse cx="6" cy="11" rx="4" ry="2.600" fill="#f4f4f4" stroke="#111"/><circle cx="11.500" cy="4.500" r="2.800" fill="#fff" stroke="#111"/><path d="M2 3l4 4M6 3l-4 4" stroke="#333"/><path d="M10 14v-4l2 2.500 2-2.500v4" stroke="#333" fill="none" stroke-width=".8"/></g><g transform="translate(860.4,51.6) scale(1.08)"><path d="M2 3l3 3M5 3l-3 3" stroke="#444"/><path d="M5 7l4 4" stroke="#888" stroke-dasharray="1 1"/><path d="M10 6h3l1 7h-5z" fill="#f4e06a" stroke="#8a7a20" stroke-width=".7"/><circle cx="11.500" cy="5" r="1.600" fill="#f8e8a0" stroke="#8a7a20" stroke-width=".6"/></g><g transform="translate(891.4,51.6) scale(1.08)"><text x="8" y="7" font-family="Liberation Sans,sans-serif" font-weight="bold" font-size="6.500" text-anchor="middle" fill="#111" letter-spacing="1.500">ABC</text><path d="M1.500 11.500h13" stroke="#555" stroke-width=".7"/><circle cx="2" cy="11.500" r="1.200" fill="#111"/><circle cx="8" cy="11.500" r="1.200" fill="#111"/><circle cx="14" cy="11.500" r="1.200" fill="#111"/></g><g transform="translate(914.4,51.6) scale(1.08)"><path d="M5 1l8 7-2 2-7-8z" fill="#e03030" stroke="#801010" stroke-width=".6"/><path d="M2 2l2 1M1 5h2M5 0v1.500" stroke="#e03030" stroke-width=".8"/><text x="8" y="15.500" font-family="Liberation Sans,sans-serif" font-size="6.500" text-anchor="middle" fill="#111" letter-spacing=".6">ABCD</text></g><g transform="translate(960.4,51.6) scale(1.08)"><path d="M1 11l5-6 7-2 2 3-6 7-7 1z" fill="#e8d08a" stroke="#8a7030" stroke-width=".7"/><path d="M4 9l6-4M5 11l6-4M7 12l5-4" stroke="#8a7030" stroke-width=".6"/><path d="M11 2l3 1-1 3" fill="#c8d8e8" stroke="#567" stroke-width=".6"/></g><g transform="translate(984.4,51.6) scale(1.08)"><circle cx="8" cy="8.500" r="6.200" fill="#2858c8" stroke="#123880"/><path d="M3 6c3-2 7-2 10 0M2 10c4 2 8 2 12 0" stroke="#9cc4ff" fill="none" stroke-width="1.200"/><path d="M5 4c2 1 4 0 5 2s-2 3-1 5" stroke="#e8f0ff" fill="none" stroke-width="1.300"/></g><g transform="translate(1027.4,51.6) scale(1.08)"><path d="M6 9l2-6 1.500 0 0 4 1-5 1.500 0 0 5 1-4 1.300.4-.5 5 1-2.500 1.200.600-1.500 6-5 2z" fill="#d8a8a0" stroke="#a06860" stroke-width=".5"/><path d="M1 13l3-4 3 2-2 4h-4z" fill="#1e5c40"/><path d="M12.500 10.500v5M10 13h5" stroke="#1d4d3a" stroke-width="1.100"/><path d="M12.500 10l-1.200 1.500h2.400zM12.500 16l-1.200-1.500h2.400zM9.500 13l1.500-1.200v2.400zM15.500 13l-1.500-1.200v2.400z" fill="#1d4d3a"/></g><g transform="translate(1051.9,51.6) scale(1.08)"><line x1="1.5" y1="14.5" x2="6" y2="10" stroke="#d890b4" stroke-width="2"/><circle cx="9" cy="6.5" r="5.3" fill="#e4efe9" stroke="#7a8a82" stroke-width="1.3"/><circle cx="7.5" cy="5" r="2" fill="#fff" fill-opacity=".6"/><path d="M11 11.5h4M13 9.5v4M11 15h4" stroke="#123" stroke-width="1" fill="none"/></g><g transform="translate(1074.4,51.6) scale(1.08)"><ellipse cx="8" cy="8" rx="7" ry="3" fill="none" stroke="#7090d0" stroke-width=".8" transform="rotate(40 8 8)"/><circle cx="9" cy="9" r="4.500" fill="#30b060" stroke="#1a6a38" stroke-width=".7"/><circle cx="5" cy="5" r="2.800" fill="#f0d840" stroke="#a08a10" stroke-width=".6"/></g><g transform="translate(1097.4,51.6) scale(1.08)"><text x="1" y="6" font-family="Liberation Sans,sans-serif" font-weight="bold" font-size="6" fill="#1d4d3a">RT</text><text x="11" y="13" font-family="Liberation Sans,sans-serif" font-weight="bold" font-size="6" fill="#1d4d3a">X</text><path d="M1 9.500h12" stroke="#111" stroke-width="1.600"/><path d="M10 5.500a4.500 4.500 0 1 0 0 8" stroke="#1d4d3a" stroke-width="1.800" fill="none"/><path d="M8 3l4 2.500-4 2z" fill="#1d4d3a"/></g><g transform="translate(1120.4,51.6) scale(1.08)"><text x="1" y="6" font-family="Liberation Sans,sans-serif" font-weight="bold" font-size="6" fill="#1d4d3a">RT</text><text x="11" y="6" font-family="Liberation Sans,sans-serif" font-weight="bold" font-size="6" fill="#1d4d3a">Y</text><path d="M8 3v12" stroke="#111" stroke-width="1.600"/><path d="M4 7a4.500 4.500 0 1 0 8 0" stroke="#1d4d3a" stroke-width="1.800" fill="none"/><path d="M2 8l2.500-4 2 4z" fill="#1d4d3a"/></g><g transform="translate(1142.9,51.6) scale(1.08)"><text x="1" y="6" font-family="Liberation Sans,sans-serif" font-weight="bold" font-size="6" fill="#1d4d3a">RT</text><text x="11" y="13" font-family="Liberation Sans,sans-serif" font-weight="bold" font-size="6" fill="#1d4d3a">Z</text><path d="M3 13a5 5 0 1 1 8 1" stroke="#1d4d3a" stroke-width="1.800" fill="none"/><path d="M1 11l2.500 4 2.500-4z" fill="#1d4d3a"/><path d="M7 14l4-5" stroke="#111" stroke-width="1.200"/></g><g transform="translate(1193.4,51.6) scale(1.08)"><path d="M3 14v-9h10" stroke="#111" stroke-width="1.400" fill="none"/><circle cx="13" cy="5" r="1.8" fill="#fff" stroke="#18c8c0" stroke-width="1.300"/><circle cx="3" cy="14" r="1.8" fill="#fff" stroke="#18c8c0" stroke-width="1.300"/></g><g transform="translate(1225.4,51.6) scale(1.08)"><path d="M2 2l12 12" stroke="#111" stroke-width="1.400"/><circle cx="3" cy="3" r="1.8" fill="#fff" stroke="#18c8c0" stroke-width="1.300"/><circle cx="13" cy="13" r="1.8" fill="#fff" stroke="#18c8c0" stroke-width="1.300"/></g><g transform="translate(1257.4,51.6) scale(1.08)"><path d="M2 2l12 12" stroke="#111" stroke-width="1.400"/><circle cx="8" cy="8" r="1.8" fill="#fff" stroke="#18c8c0" stroke-width="1.300"/></g><g transform="translate(1280.4,51.6) scale(1.08)"><path d="M2 2l12 12M14 2l-12 12" stroke="#111" stroke-width="1.400"/><circle cx="8" cy="8" r="1.8" fill="#fff" stroke="#18c8c0" stroke-width="1.300"/></g><g transform="translate(1303.4,51.6) scale(1.08)"><path d="M2 2l12 12" stroke="#111" stroke-width="1.400"/><path d="M14 2l-12 12" stroke="#111" stroke-width="1.400" stroke-dasharray="3 1.500"/><circle cx="8" cy="8" r="1.8" fill="#fff" stroke="#18c8c0" stroke-width="1.300"/></g><g transform="translate(1335.4,51.6) scale(1.08)"><circle cx="8" cy="8" r="6" fill="#eef3f0" stroke="#111" stroke-width="1.200"/><circle cx="8" cy="8" r="2" fill="#fff" stroke="#18c8c0" stroke-width="1.300"/></g><g transform="translate(1358.4,51.6) scale(1.08)"><circle cx="8" cy="8" r="5" fill="none" stroke="#111" stroke-width="1.200"/><circle cx="8" cy="3" r="1.8" fill="#fff" stroke="#18c8c0" stroke-width="1.300"/><circle cx="8" cy="13" r="1.8" fill="#fff" stroke="#18c8c0" stroke-width="1.300"/><circle cx="3" cy="8" r="1.8" fill="#fff" stroke="#18c8c0" stroke-width="1.300"/><circle cx="13" cy="8" r="1.8" fill="#fff" stroke="#18c8c0" stroke-width="1.300"/></g><g transform="translate(1381.4,51.6) scale(1.08)"><circle cx="7.500" cy="9" r="5.500" fill="#eef3f0" stroke="#111" stroke-width="1.200"/><path d="M6 2l8 3" stroke="#111" stroke-width="1.200"/><circle cx="10" cy="3.5" r="1.8" fill="#fff" stroke="#18c8c0" stroke-width="1.300"/></g><g transform="translate(1412.9,51.6) scale(1.08)"><path d="M1 8h14M11 1v14" stroke="#111" stroke-width="1.400"/><text x="1" y="14.500" font-family="Liberation Sans,sans-serif" font-size="5.500" fill="#111">90°</text><circle cx="11" cy="8" r="1.8" fill="#fff" stroke="#18c8c0" stroke-width="1.300"/></g><g transform="translate(1436.4,51.6) scale(1.08)"><path d="M2 3l10 11M6 2l9 10" stroke="#111" stroke-width="1.500"/></g><g transform="translate(1459.4,51.6) scale(1.08)"><rect x="5" y="2.500" width="8" height="6" fill="#f0c8e8" stroke="#111"/><circle cx="5" cy="11" r="3.500" fill="#eef3f0" stroke="#111"/><circle cx="13" cy="10" r="1.8" fill="#fff" stroke="#18c8c0" stroke-width="1.300"/></g><g transform="translate(1482.4,51.6) scale(1.08)"><circle cx="8" cy="9" r="2" fill="#fff" stroke="#18c8c0" stroke-width="1.300"/></g><g transform="translate(1514.9,51.6) scale(1.08)"><path d="M2 2l12 12" stroke="#111" stroke-width="1.400"/><circle cx="10" cy="10" r="1.8" fill="#fff" stroke="#18c8c0" stroke-width="1.300"/><circle cx="5" cy="13" r="2" fill="#eee" stroke="#555" stroke-width=".8"/></g><g transform="translate(1537.9,51.6) scale(1.08)"><path d="M1 7c0 5 3 8 7 8s7-3 7-8z" fill="#9aa8a0" stroke="#555" stroke-width=".6"/><path d="M1 7h14" stroke="#e03020" stroke-width="2" stroke-dasharray="1.500 1"/><path d="M10 6l4-4" stroke="#777" stroke-width="2"/><rect x="12.500" y=".5" width="3" height="3" fill="#fff" stroke="#333" stroke-width=".8"/></g><g transform="translate(1569.9,51.6) scale(1.08)"><path d="M2 10l5-5 2.500 2.500-4 4a1.500 1.500 0 0 0 2.500 2.500l4-4 2.500 2" stroke="#d09088" stroke-width="3" fill="none"/><rect x="12" y="1.500" width="3" height="3" fill="#fff" stroke="#1aa" stroke-width=".9"/></g><g transform="translate(20.0,79.0) scale(1.12)"><path d="M1 11l7-3 7 3-7 3z" fill="#e898c8" stroke="#a05888" stroke-width=".6"/><path d="M1 8l7-3 7 3-7 3z" fill="#b8ccc0" stroke="#68887a" stroke-width=".6"/><path d="M1 5l7-3 7 3-7 3z" fill="#c8dad0" stroke="#68887a" stroke-width=".6"/><path d="M10 12l4 3M10 12v3M10 12h3" stroke="#145a32" stroke-width=".9" fill="none"/></g><g transform="translate(43.0,79.0) scale(1.12)"><path d="M3 9l7-3 5 3-7 3z" fill="#b8ccc0" stroke="#68887a" stroke-width=".6"/><path d="M3 6l7-3 5 3-7 3z" fill="#c8dad0" stroke="#68887a" stroke-width=".6"/><line x1="1" y1="15" x2="5" y2="11" stroke="#c8508c" stroke-width="2"/><circle cx="7" cy="8" r="4.300" fill="#9fb8ac" fill-opacity=".85" stroke="#667" stroke-width="1"/></g><g transform="translate(77.8,81.3) scale(0.9)"><path d="M8 1.500a4.500 4.500 0 0 1 2.500 8.200v2.300h-5v-2.300a4.500 4.500 0 0 1 2.500-8.200z" fill="#ffff78" stroke="#111" stroke-width="1.100"/><path d="M6 13.500h4M6.500 15h3" stroke="#111" stroke-width="1.100"/></g><g transform="translate(96.8,81.3) scale(0.9)"><path d="M8 0v16M0 8h16M2.300 2.300l11.400 11.400M13.700 2.300l-11.400 11.400" stroke="#222" stroke-width="1"/><circle cx="8" cy="8" r="4.600" fill="#ffff78" stroke="#c8c800" stroke-width="1.600"/></g><g transform="translate(1005.0,79.0) scale(1.12)"><rect x="2.500" y="2.500" width="8" height="7" fill="#dde8e2" stroke="#1d4d3a"/><path d="M1 13.500h12M13.500 14v-11" stroke="#1d4d3a" stroke-width="1.500" fill="none"/><path d="M13.500 1l-2 3h4z" fill="#1d4d3a"/><path d="M7 13.500l2.500-2v4z" fill="#1d4d3a"/></g><g transform="translate(1038.0,79.0) scale(1.12)"><rect x="1.500" y="2.500" width="13" height="12" fill="#f4f6fa" stroke="#8898b8" stroke-width=".8"/><text x="8" y="13" font-family="Liberation Serif,serif" font-weight="bold" font-size="12" text-anchor="middle" fill="#2850b8">W</text></g><g transform="translate(1060.5,79.0) scale(1.12)"><path d="M8 1l6.500 3-6.500 3-6.500-3z" fill="#1040a0" stroke="#1d4d3a" stroke-width="1"/><path d="M1.500 4l6.500 3v8l-6.500-3z" fill="#eef4f0" stroke="#1d4d3a" stroke-width="1"/><path d="M14.500 4l-6.500 3v8l6.500-3z" fill="#eef4f0" stroke="#1d4d3a" stroke-width="1"/></g><g transform="translate(1083.5,79.0) scale(1.12)"><path d="M8 1l6.500 3-6.500 3-6.500-3z" fill="#eef4f0" stroke="#1d4d3a" stroke-width="1"/><path d="M1.500 4l6.500 3v8l-6.500-3z" fill="#dfe8f4" stroke="#1d4d3a" stroke-width="1"/><path d="M14.500 4l-6.500 3v8l6.500-3z" fill="#dfe8f4" stroke="#1d4d3a" stroke-width="1"/><path d="M1.500 12l6.500 3 6.500-3-6.500-3z" fill="#1040a0" fill-opacity=".9"/><path d="M1.500 4l6.500 3 6.500-3M8 7v8" stroke="#1d4d3a" fill="none"/></g><g transform="translate(1106.5,79.0) scale(1.12)"><path d="M8 1l6.500 3-6.500 3-6.500-3z" fill="#eef4f0" stroke="#1d4d3a" stroke-width="1"/><path d="M1.500 4l6.500 3v8l-6.500-3z" fill="#1040a0" stroke="#1d4d3a" stroke-width="1"/><path d="M14.500 4l-6.500 3v8l6.500-3z" fill="#eef4f0" stroke="#1d4d3a" stroke-width="1"/></g><g transform="translate(1129.5,79.0) scale(1.12)"><path d="M8 1l6.500 3-6.500 3-6.500-3z" fill="#eef4f0" stroke="#1d4d3a" stroke-width="1"/><path d="M1.500 4l6.500 3v8l-6.500-3z" fill="#eef4f0" stroke="#1d4d3a" stroke-width="1"/><path d="M14.500 4l-6.500 3v8l6.500-3z" fill="#1040a0" stroke="#1d4d3a" stroke-width="1"/></g><g transform="translate(1152.5,79.0) scale(1.12)"><path d="M8 1l6.500 3-6.500 3-6.500-3z" fill="#eef4f0" stroke="#1d4d3a" stroke-width="1"/><path d="M1.500 4l6.500 3v8l-6.500-3z" fill="#c8d8f0" stroke="#1d4d3a" stroke-width="1"/><path d="M14.500 4l-6.500 3v8l6.500-3z" fill="#eef4f0" stroke="#1d4d3a" stroke-width="1"/><path d="M8 1v8l-6.500 3v-8z" fill="#1040a0" fill-opacity=".8"/></g><g transform="translate(1175.5,79.0) scale(1.12)"><path d="M8 1l6.500 3-6.500 3-6.500-3z" fill="#eef4f0" stroke="#1d4d3a" stroke-width="1"/><path d="M1.500 4l6.500 3v8l-6.500-3z" fill="#eef4f0" stroke="#1d4d3a" stroke-width="1"/><path d="M14.500 4l-6.500 3v8l6.500-3z" fill="#c8d8f0" stroke="#1d4d3a" stroke-width="1"/><path d="M1.500 4l6.500 3v8l-6.500-3z" fill="#1040a0" fill-opacity=".35"/></g><g transform="translate(1221.5,79.0) scale(1.12)"><circle cx="6" cy="7" r="4.800" fill="#b8d0c0" fill-opacity=".6" stroke="#3a7a58" stroke-width="1.300"/><circle cx="10" cy="10" r="4.800" fill="#b8d0c0" fill-opacity=".6" stroke="#3a7a58" stroke-width="1.300"/></g><g transform="translate(1244.5,79.0) scale(1.12)"><circle cx="6" cy="7" r="4.800" fill="#b8d0c0" fill-opacity=".6" stroke="#3a7a58" stroke-width="1.300"/><circle cx="10" cy="10" r="4.800" fill="#b8d0c0" fill-opacity=".6" stroke="#3a7a58" stroke-width="1.300"/></g><g transform="translate(1267.5,79.0) scale(1.12)"><circle cx="6" cy="7" r="4.800" fill="#b8d0c0" fill-opacity=".6" stroke="#3a7a58" stroke-width="1.300"/><circle cx="10" cy="10" r="4.800" fill="#b8d0c0" fill-opacity=".6" stroke="#3a7a58" stroke-width="1.300"/></g><g transform="translate(1301.0,79.0) scale(1.12)"><path d="M2 1v10" stroke="#1d4d3a" stroke-width="1.500"/><path d="M2 0l-1.800 3h3.600z" fill="#1d4d3a"/><path d="M4.500 7l2.500-2.500h8v7l-2.500 2.500h-8z" fill="#5d9078" stroke="#111"/><path d="M4.500 7h8v7M12.500 7l2.500-2.500" stroke="#111" fill="none"/><rect x="6" y="9" width="5" height="4" fill="#cfe0d8" stroke="#111" stroke-width=".7"/></g><g transform="translate(1323.0,79.0) scale(1.12)"><path d="M1.500 4.500l3-3h10v9l-3 3h-10z" fill="#f4f7f5" stroke="#111" stroke-width="1"/><path d="M1.500 4.500h10v9M11.500 4.500l3-3" stroke="#111" fill="none"/><path d="M6.500 6v7M3 9.500h7" stroke="#1d4d3a" stroke-width="1.200"/><path d="M6.500 5l-1.500 2h3zM6.500 14l-1.500-2h3zM2 9.500l2-1.500v3zM11 9.500l-2-1.500v3z" fill="#1d4d3a"/></g><g transform="translate(1346.0,79.0) scale(1.12)"><rect x="1.500" y="1.500" width="11" height="11" fill="#5d9078" stroke="#111"/><rect x="4.500" y="4.500" width="10" height="10" fill="#e8efeb" stroke="#111"/><rect x="6" y="6" width="7" height="7" fill="#f8faf9" stroke="#1d4d3a" stroke-width=".7"/></g><g transform="translate(1369.0,79.0) scale(1.12)"><path d="M1.500 4.500l3-3h10v9l-3 3h-10z" fill="#f4f7f5" stroke="#111" stroke-width="1"/><path d="M1.500 4.500h10v9M11.500 4.500l3-3" stroke="#111" fill="none"/><path d="M3.500 6.500l6 6M9.500 6.500l-6 6" stroke="#e02020" stroke-width="1.800"/></g><g transform="translate(1391.5,79.0) scale(1.12)"><path d="M1.500 4.500l3-3h10v9l-3 3h-10z" fill="#f4f7f5" stroke="#111" stroke-width="1"/><path d="M1.500 4.500h10v9M11.500 4.500l3-3" stroke="#111" fill="none"/><rect x="5" y="7" width="6" height="6" fill="#3a8a60"/><path d="M6.500 9a2 2 0 1 0 3 0" stroke="#fff" fill="none" stroke-width=".9"/></g><g transform="translate(1414.5,79.0) scale(1.12)"><path d="M2 8l4-3 8 2v5l-4 3-8-2z" fill="#e8efeb" stroke="#111"/><path d="M2 8l8 2 4-3M10 10v5" stroke="#111" fill="none"/><path d="M7 2l5 1.500" stroke="#1d4d3a" stroke-width="1.500"/><path d="M14 4.500l-3-2.500.5 3z" fill="#1d4d3a"/></g><g transform="translate(1437.0,79.0) scale(1.12)"><rect x="3.500" y="1.500" width="7" height="6" fill="#cfe0d8" stroke="#111"/><rect x="7.500" y="7.500" width="7" height="7" fill="#5d9078" stroke="#111"/><path d="M2 9v4h4" stroke="#1d4d3a" stroke-width="1.400" fill="none"/><path d="M2 7.500l-1.700 2.500h3.400z" fill="#1d4d3a"/></g><g transform="translate(1461.0,79.0) scale(1.12)"><path d="M1.500 5.500l2-2h7v7l-2 2h-7z" fill="#e85050" stroke="#111"/><path d="M1.500 5.500h7v7M8.500 5.500l2-2" stroke="#111" fill="none"/><rect x="12" y="1.500" width="3" height="3" fill="#30b060" stroke="#111" stroke-width=".6"/><rect x="12" y="6.500" width="3" height="3" fill="#3060e0" stroke="#111" stroke-width=".6"/><rect x="12" y="11.500" width="3" height="3" fill="#e85050" stroke="#111" stroke-width=".6"/></g><g transform="translate(1494.0,79.0) scale(1.12)"><path d="M4.500 3.500l2-2h8v8l-2 2" fill="#cfe0d8" stroke="#111"/><rect x="4.500" y="3.500" width="8" height="8" fill="#5d9078" stroke="#111"/><path d="M2 12.500v-3M1 14.500h11" stroke="#1d4d3a" stroke-width="1.400"/><path d="M2 8l-1.600 2.500h3.200z" fill="#1d4d3a"/></g><g transform="translate(1517.0,79.0) scale(1.12)"><path d="M1.500 5.500l2-2h7v7l-2 2h-7z" fill="#a8d0f0" stroke="#111"/><path d="M1.500 5.500h7v7M8.500 5.500l2-2" stroke="#111" fill="none"/><rect x="12" y="1.500" width="3" height="3" fill="#30b060" stroke="#111" stroke-width=".6"/><rect x="12" y="6.500" width="3" height="3" fill="#3060e0" stroke="#111" stroke-width=".6"/><rect x="12" y="11.500" width="3" height="3" fill="#e85050" stroke="#111" stroke-width=".6"/></g><g transform="translate(1547.5,79.0) scale(1.12)"><path d="M1.500 4.500l3-3h10v10l-3 3h-10z" fill="#5d9078" stroke="#111"/><path d="M1.500 4.500h10v10M11.500 4.500l3-3" stroke="#111" fill="none"/><circle cx="6.500" cy="10" r="2.800" fill="none" stroke="#e8f4ee" stroke-width="1.200"/></g><g transform="translate(1570.5,79.0) scale(1.12)"><path d="M7 1l2 0 0 5-2 0z" fill="#c8508c"/><path d="M4 6h8l2 9h-12z" fill="#f0c030" stroke="#a07a10" stroke-width=".7"/><path d="M5 8v6M8 8v6M11 8v6" stroke="#a07a10" stroke-width=".7"/><path d="M12 6l3-2v8l-2 2" fill="#cfe0d8" stroke="#68887a" stroke-width=".6"/></g><g transform="translate(1594.0,79.0) scale(1.12)"><rect x="4" y="1.500" width="8" height="4.500" rx="1.500" fill="#5d9078" stroke="#111"/><rect x="4" y="10" width="8" height="4.500" rx="1.500" fill="#5d9078" stroke="#111"/><path d="M1 8h14" stroke="#111" stroke-dasharray="2 1"/></g><g transform="translate(1617.0,79.0) scale(1.12)"><path d="M1.500 4.500l3-3h10v10l-3 3h-10z" fill="#5d9078" stroke="#111"/><path d="M1.500 4.500h10v10M11.500 4.500l3-3" stroke="#111" fill="none"/><rect x="4" y="7" width="5.500" height="5.500" fill="#cfe0d8" stroke="#111" stroke-width=".7"/></g><g transform="translate(1639.5,79.0) scale(1.12)"><path d="M1.500 4.500l2-2h8v7l-2 2h-8z" fill="#cfe0d8" stroke="#111"/><path d="M1.500 4.500h8v7M9.500 4.500l2-2" stroke="#111" fill="none"/><path d="M6 10l3 4 6-7" stroke="#1848c0" stroke-width="2.400" fill="none"/></g><g transform="translate(1658.2,120.2) scale(1.1)"><path d="M2 14l2-4 8-8 2 2-8 8z" fill="#e898c8" stroke="#a05888" stroke-width=".5"/><path d="M9 5l2 2 3-3-2-2z" fill="#e05040"/><path d="M1 2h14" stroke="#555" stroke-width=".6"/><path d="M8 6l2 2" stroke="#1aa" stroke-width="1.500"/></g><g transform="translate(1658.2,142.2) scale(1.1)"><circle cx="5" cy="11" r="3.500" fill="#e4ece8" stroke="#111" stroke-width="1.200"/><circle cx="10.500" cy="4.500" r="3.500" fill="#e4ece8" stroke="#111" stroke-width="1.200"/><path d="M9 13c3 0 5-2 5-5" stroke="#1d4d3a" stroke-width="1.600" fill="none"/><path d="M7.500 13l3-2v4z" fill="#1d4d3a"/></g><g transform="translate(1658.2,164.2) scale(1.1)"><path d="M1 3h5.500v11z" fill="#e4ece8" stroke="#111" stroke-width="1.100"/><path d="M15 3h-5.500v11z" fill="#e4ece8" stroke="#111" stroke-width="1.100"/><path d="M8 0v16" stroke="#1d4d3a" stroke-width="1.400"/></g><g transform="translate(1658.2,186.2) scale(1.1)"><path d="M2 15v-9a4.500 4.500 0 0 1 9 0h1a2 2 0 0 1 0 5h-4v4" fill="none" stroke="#111" stroke-width="1.200"/><path d="M5 15v-8.500a2 2 0 0 1 4 0v2h3" fill="none" stroke="#1d4d3a" stroke-width="1.600"/></g><g transform="translate(1658.2,208.2) scale(1.1)"><rect x="1.500" y="1.500" width="5.500" height="5.500" fill="#e4ece8" stroke="#111" stroke-width="1.200"/><rect x="9.500" y="1.500" width="5.500" height="5.500" fill="#e4ece8" stroke="#111" stroke-width="1.200"/><rect x="1.500" y="9.500" width="5.500" height="5.500" fill="#e4ece8" stroke="#111" stroke-width="1.200"/><rect x="9.500" y="9.500" width="5.500" height="5.500" fill="#e4ece8" stroke="#111" stroke-width="1.200"/></g><g transform="translate(1658.2,230.2) scale(1.1)"><path d="M8 1l2.500 3h-5zM8 15l2.500-3h-5zM1 8l3-2.500v5zM15 8l-3-2.500v5z" fill="#1d4d3a"/><path d="M8 3v10M3 8h10" stroke="#1d4d3a" stroke-width="1.800"/><circle cx="8" cy="8" r="1.800" fill="#111"/></g><g transform="translate(1658.2,252.2) scale(1.1)"><path d="M12.500 4.500a6 6 0 1 0 1.500 5" fill="none" stroke="#1d4d3a" stroke-width="1.800"/><path d="M10 2l5 0 0 5z" fill="#1d4d3a"/><circle cx="8" cy="8.500" r="1.200" fill="#1d4d3a"/></g><g transform="translate(1658.2,274.2) scale(1.1)"><path d="M1.500 1.500h13v13h-13z" fill="#dbe6e0" stroke="#7fa896" stroke-width=".8"/><path d="M1.500 1.500l6.500 6.500" stroke="#1d4d3a" stroke-width=".8"/><path d="M8 8h6.500M8 8v6.500" stroke="#111" stroke-width="1.200" stroke-dasharray="1.200 1.200"/></g><g transform="translate(1658.2,296.2) scale(1.1)"><path d="M1.500 8.500l13-6.500v6.500z" fill="#cfe0d8" stroke="#1d4d3a" stroke-width="1"/><rect x="1.500" y="9.500" width="13" height="5" fill="#f4f7f5" stroke="#111" stroke-width="1.200"/><path d="M3 11h10" stroke="#111" stroke-dasharray="1 1" stroke-width=".8"/></g><g transform="translate(1658.2,318.2) scale(1.1)"><path d="M3 8l11-5" stroke="#1d4d3a" stroke-width="1.600"/><path d="M8.500 5.500v9" stroke="#1d4d3a" stroke-width="1.300" stroke-dasharray="2 1.500"/></g><g transform="translate(1658.2,340.2) scale(1.1)"><path d="M2 6l11-5" stroke="#1d4d3a" stroke-width="1.400"/><path d="M7 4v11" stroke="#1d4d3a" stroke-width="1.200" stroke-dasharray="2 1.500"/><path d="M12 15v-7" stroke="#111" stroke-width="1.300"/><path d="M12 5l-2 3.500h4z" fill="#111"/></g><g transform="translate(1658.2,362.2) scale(1.1)"><rect x="2.500" y="1.500" width="10" height="13" fill="#e4ece8" stroke="#111" stroke-width="1.300"/><rect x="11" y="8" width="3" height="3" fill="#1d4d3a"/></g><g transform="translate(1658.2,384.2) scale(1.1)"><rect x="2.500" y="1.500" width="10" height="13" fill="#e4ece8" stroke="#111" stroke-width="1.300"/><rect x="11" y="3.500" width="3" height="2.500" fill="#18c8c0"/><rect x="11" y="10" width="3" height="2.500" fill="#18c8c0"/><rect x="11.500" y="6" width="2.500" height="4" fill="#dfe6e2"/></g><g transform="translate(1658.2,406.2) scale(1.1)"><path d="M14 2l-7 6-6 2M14 11l-5-3" stroke="#fff" stroke-width="2.400"/><path d="M1 1l14 14" stroke="#1d4d3a" stroke-width="2"/><path d="M4 4l9 9" stroke="#18c8c0" stroke-width="1"/></g><g transform="translate(1658.2,428.2) scale(1.1)"><path d="M1 2h7l6 6v7" fill="none" stroke="#111" stroke-width="1.300"/><path d="M8 2h6v6" fill="none" stroke="#111" stroke-dasharray="1 1"/><path d="M8 2l6 6" stroke="#1d4d3a" stroke-width="1.800"/></g><g transform="translate(1658.2,450.2) scale(1.1)"><path d="M1 2h5a8 8 0 0 1 8 8v5" fill="none" stroke="#111" stroke-width="1.300"/><path d="M6 2h8v8" fill="none" stroke="#111" stroke-dasharray="1 1"/><path d="M6 2a8 8 0 0 1 8 8" stroke="#1d4d3a" stroke-width="1.800" fill="none"/></g><g transform="translate(1658.2,472.2) scale(1.1)"><path d="M2 2l5 5" stroke="#555" stroke-width="1.500"/><path d="M1 1l3 1-2 2z" fill="#888"/><path d="M10 5l1 3 3-1-2 3 3 2-3 1 0 3-3-2-2 2 0-3-3-1 3-2-1-3 3 1z" fill="#f04020" stroke="#a01808" stroke-width=".5"/><circle cx="9.500" cy="10" r="2" fill="#f8e040"/></g><g transform="translate(1659.0,551.5)"><rect x="1.500" y="7.500" width="8" height="7" fill="#f4f7f5" stroke="#1d4d3a" stroke-width="1"/><rect x="7.500" y="1.500" width="7" height="7" fill="#dbe6e0" stroke="#1d4d3a" stroke-width="1"/><rect x="4" y="4" width="8" height="8" fill="#5d9078" stroke="#1d4d3a" stroke-width="1"/></g><g transform="translate(1659.0,573.5)"><rect x="1.500" y="8.500" width="7" height="6" fill="#cfe0d8" stroke="#1d4d3a" stroke-width="1"/><rect x="8.500" y="1.500" width="6" height="6" fill="#e4ece8" stroke="#1d4d3a" stroke-width="1"/><rect x="4.500" y="4.500" width="7" height="7" fill="#5d9078" stroke="#1d4d3a" stroke-width="1"/></g><g transform="translate(1659.0,652.5)"><rect x="1" y="1" width="14" height="3.500" fill="#c03090"/><path d="M3 1v2M5.500 1v2M8 1v2M10.500 1v2M13 1v2" stroke="#fff" stroke-width=".9"/><path d="M2 10.500h12" stroke="#1d4d3a" stroke-width="1.200" stroke-dasharray="1.500 1.200"/><rect x="1" y="9" width="3" height="3" fill="#1d4d3a"/><rect x="12" y="9" width="3" height="3" fill="#1d4d3a"/></g><g transform="translate(1659.0,674.0)"><rect x="1" y="1" width="14" height="3.500" fill="#c03090"/><path d="M3 1v2M5.500 1v2M8 1v2M10.500 1v2M13 1v2" stroke="#fff" stroke-width=".9"/><path d="M3 9l12-3.500v10h-10z" fill="#2e6d50" stroke="#1d4d3a" stroke-width=".6"/></g><g transform="translate(1659.0,696.5)"><rect x="1" y="1" width="14" height="3.500" fill="#c03090"/><path d="M3 1v2M5.500 1v2M8 1v2M10.500 1v2M13 1v2" stroke="#fff" stroke-width=".9"/><path d="M1 11l4-4 10-1-1 6-9 3.500z" fill="#4e8a6c" stroke="#1d4d3a" stroke-width=".6"/><path d="M1 11l9-2 5-3" stroke="#dde8e2" fill="none" stroke-width=".8"/></g><g transform="translate(1659.0,726.5)"><path d="M3 2l10 1.500-1 11-10-1.500z" fill="#dbe6e0" stroke="#1d4d3a" stroke-width=".9"/><path d="M5 5l6 1M5 7.500l6 1M4.500 10l6 1" stroke="#1d4d3a" stroke-width=".9"/><path d="M13 3.500c2 0 2-2 0-2" stroke="#1d4d3a" fill="none"/></g><g transform="translate(1659.0,747.0)"><path d="M2 14.500h12.500M14.500 14.500v-12" stroke="#1d4d3a" stroke-width="1.300"/><path d="M14.500 1l-1.500 2.500h3zM1 14.500l2.500-1.500v3z" fill="#1d4d3a"/><line x1="1.500" y1="12.500" x2="6" y2="7" stroke="#c02040" stroke-width="1.300"/><circle cx="8" cy="4.500" r="3.500" fill="#cfe0d8" stroke="#555" stroke-width="1"/><rect x="6.500" y="3" width="3" height="3" fill="#1e5c40"/><path d="M8 8l5 5" stroke="#1d4d3a" stroke-width=".9"/></g><g transform="translate(20.5,978.0)"><path d="M1 11l7 3 7-3v1.800l-7 3-7-3z" fill="#c06878"/><path d="M1 11l7-3 7 3-7 3z" fill="#e89aa8"/><path d="M2.500 11l5.500-2.300 5.500 2.300" fill="none" stroke="#fff" stroke-opacity=".45" stroke-width=".6"/><path d="M1 8l7 3 7-3v1.800l-7 3-7-3z" fill="#0d8a84"/><path d="M1 8l7-3 7 3-7 3z" fill="#20b8b0"/><path d="M2.500 8l5.500-2.300 5.500 2.300" fill="none" stroke="#fff" stroke-opacity=".45" stroke-width=".6"/><path d="M1 5l7 3 7-3v1.800l-7 3-7-3z" fill="#c06878"/><path d="M1 5l7-3 7 3-7 3z" fill="#e89aa8"/><path d="M2.500 5l5.500-2.300 5.500 2.300" fill="none" stroke="#fff" stroke-opacity=".45" stroke-width=".6"/><path d="M4 12l8-8" stroke="#111" stroke-width="2"/><circle cx="12.500" cy="3" r="2" fill="#fff" stroke="#111" stroke-width=".8"/><path d="M3 13l1-4 3 3z" fill="#111"/></g><g transform="translate(53.5,978.0)"><path d="M1 11l7 3 7-3v1.800l-7 3-7-3z" fill="#c06878"/><path d="M1 11l7-3 7 3-7 3z" fill="#e89aa8"/><path d="M2.500 11l5.500-2.300 5.500 2.300" fill="none" stroke="#fff" stroke-opacity=".45" stroke-width=".6"/><path d="M1 8l7 3 7-3v1.800l-7 3-7-3z" fill="#c06878"/><path d="M1 8l7-3 7 3-7 3z" fill="#e89aa8"/><path d="M2.500 8l5.500-2.300 5.500 2.300" fill="none" stroke="#fff" stroke-opacity=".45" stroke-width=".6"/><path d="M1 5l7 3 7-3v1.800l-7 3-7-3z" fill="#c06878"/><path d="M1 5l7-3 7 3-7 3z" fill="#e89aa8"/><path d="M2.500 5l5.500-2.300 5.500 2.300" fill="none" stroke="#fff" stroke-opacity=".45" stroke-width=".6"/><path d="M13 3c-5-2-9 1-8 5" stroke="#111" stroke-width="1.800" fill="none"/><path d="M2 6l3 4 3-4z" fill="#111"/></g><g transform="translate(76.0,978.0)"><path d="M1 11l7 3 7-3v1.800l-7 3-7-3z" fill="#0d8a84"/><path d="M1 11l7-3 7 3-7 3z" fill="#20b8b0"/><path d="M2.500 11l5.500-2.300 5.500 2.300" fill="none" stroke="#fff" stroke-opacity=".45" stroke-width=".6"/><path d="M1 8l7 3 7-3v1.800l-7 3-7-3z" fill="#0d8a84"/><path d="M1 8l7-3 7 3-7 3z" fill="#20b8b0"/><path d="M2.500 8l5.500-2.300 5.500 2.300" fill="none" stroke="#fff" stroke-opacity=".45" stroke-width=".6"/><path d="M1 5l7 3 7-3v1.800l-7 3-7-3z" fill="#0d8a84"/><path d="M1 5l7-3 7 3-7 3z" fill="#20b8b0"/><path d="M2.500 5l5.500-2.300 5.500 2.300" fill="none" stroke="#fff" stroke-opacity=".45" stroke-width=".6"/><path d="M8 2v10" stroke="#111" stroke-width="1.400"/><path d="M8 7l-2.500-3h5zM8 7l-2.500 3h5z" fill="#111"/></g><g transform="translate(98.5,978.0)"><path d="M1 11l7 3 7-3v1.800l-7 3-7-3z" fill="#0d8a84"/><path d="M1 11l7-3 7 3-7 3z" fill="#20b8b0"/><path d="M2.500 11l5.500-2.300 5.500 2.300" fill="none" stroke="#fff" stroke-opacity=".45" stroke-width=".6"/><path d="M1 8l7 3 7-3v1.800l-7 3-7-3z" fill="#0d8a84"/><path d="M1 8l7-3 7 3-7 3z" fill="#20b8b0"/><path d="M2.500 8l5.500-2.300 5.500 2.300" fill="none" stroke="#fff" stroke-opacity=".45" stroke-width=".6"/><path d="M1 5l7 3 7-3v1.800l-7 3-7-3z" fill="#0d8a84"/><path d="M1 5l7-3 7 3-7 3z" fill="#20b8b0"/><path d="M2.500 5l5.500-2.300 5.500 2.300" fill="none" stroke="#fff" stroke-opacity=".45" stroke-width=".6"/><text x="8" y="13" font-family="Liberation Sans,sans-serif" font-weight="bold" font-size="13" text-anchor="middle" fill="#c01010">?</text></g><g transform="translate(130.5,978.0)"><path d="M1 11l7 3 7-3v1.800l-7 3-7-3z" fill="#0d8a84"/><path d="M1 11l7-3 7 3-7 3z" fill="#20b8b0"/><path d="M2.500 11l5.500-2.300 5.500 2.300" fill="none" stroke="#fff" stroke-opacity=".45" stroke-width=".6"/><path d="M1 8l7 3 7-3v1.800l-7 3-7-3z" fill="#c06878"/><path d="M1 8l7-3 7 3-7 3z" fill="#e89aa8"/><path d="M2.500 8l5.500-2.300 5.500 2.300" fill="none" stroke="#fff" stroke-opacity=".45" stroke-width=".6"/><path d="M1 5l7 3 7-3v1.800l-7 3-7-3z" fill="#0d8a84"/><path d="M1 5l7-3 7 3-7 3z" fill="#20b8b0"/><path d="M2.500 5l5.500-2.300 5.500 2.300" fill="none" stroke="#fff" stroke-opacity=".45" stroke-width=".6"/></g><g transform="translate(153.5,978.0)"><path d="M1 11l7 3 7-3v1.800l-7 3-7-3z" fill="#0d8a84"/><path d="M1 11l7-3 7 3-7 3z" fill="#20b8b0"/><path d="M2.500 11l5.500-2.300 5.500 2.300" fill="none" stroke="#fff" stroke-opacity=".45" stroke-width=".6"/><path d="M1 8l7 3 7-3v1.800l-7 3-7-3z" fill="#c06878"/><path d="M1 8l7-3 7 3-7 3z" fill="#e89aa8"/><path d="M2.500 8l5.500-2.300 5.500 2.300" fill="none" stroke="#fff" stroke-opacity=".45" stroke-width=".6"/><path d="M1 5l7 3 7-3v1.800l-7 3-7-3z" fill="#0d8a84"/><path d="M1 5l7-3 7 3-7 3z" fill="#20b8b0"/><path d="M2.500 5l5.500-2.300 5.500 2.300" fill="none" stroke="#fff" stroke-opacity=".45" stroke-width=".6"/><path d="M11 11l4 4M11 11v4M11 11h4" stroke="#145a32" stroke-width="1" fill="none"/></g><g transform="translate(177.0,978.0)"><path d="M1 11l7 3 7-3v1.800l-7 3-7-3z" fill="#0d8a84"/><path d="M1 11l7-3 7 3-7 3z" fill="#20b8b0"/><path d="M2.500 11l5.500-2.300 5.500 2.300" fill="none" stroke="#fff" stroke-opacity=".45" stroke-width=".6"/><path d="M1 8l7 3 7-3v1.800l-7 3-7-3z" fill="#c06878"/><path d="M1 8l7-3 7 3-7 3z" fill="#e89aa8"/><path d="M2.500 8l5.500-2.300 5.500 2.300" fill="none" stroke="#fff" stroke-opacity=".45" stroke-width=".6"/><path d="M1 5l7 3 7-3v1.800l-7 3-7-3z" fill="#0d8a84"/><path d="M1 5l7-3 7 3-7 3z" fill="#20b8b0"/><path d="M2.500 5l5.500-2.300 5.500 2.300" fill="none" stroke="#fff" stroke-opacity=".45" stroke-width=".6"/><path d="M8 3v10M3.500 5.500l9 5M12.500 5.500l-9 5" stroke="#fff" stroke-width="1.800"/><path d="M8 3v10M3.500 5.500l9 5M12.500 5.500l-9 5" stroke="#8ad" stroke-width=".6"/></g><g transform="translate(200.0,978.0)"><path d="M1 11l7 3 7-3v1.800l-7 3-7-3z" fill="#0d8a84"/><path d="M1 11l7-3 7 3-7 3z" fill="#20b8b0"/><path d="M2.500 11l5.500-2.300 5.500 2.300" fill="none" stroke="#fff" stroke-opacity=".45" stroke-width=".6"/><path d="M1 8l7 3 7-3v1.800l-7 3-7-3z" fill="#0d8a84"/><path d="M1 8l7-3 7 3-7 3z" fill="#20b8b0"/><path d="M2.500 8l5.500-2.300 5.500 2.300" fill="none" stroke="#fff" stroke-opacity=".45" stroke-width=".6"/><path d="M1 5l7 3 7-3v1.800l-7 3-7-3z" fill="#0d8a84"/><path d="M1 5l7-3 7 3-7 3z" fill="#20b8b0"/><path d="M2.500 5l5.500-2.300 5.500 2.300" fill="none" stroke="#fff" stroke-opacity=".45" stroke-width=".6"/><path d="M8 3v10M3.500 5.500l9 5M12.500 5.500l-9 5" stroke="#fff" stroke-width="1.800"/><path d="M8 3v10M3.500 5.500l9 5M12.500 5.500l-9 5" stroke="#8ad" stroke-width=".6"/></g><g transform="translate(232.0,978.0)"><path d="M1 11l7 3 7-3v1.800l-7 3-7-3z" fill="#c06878"/><path d="M1 11l7-3 7 3-7 3z" fill="#e89aa8"/><path d="M2.500 11l5.500-2.300 5.500 2.300" fill="none" stroke="#fff" stroke-opacity=".45" stroke-width=".6"/><path d="M1 8l7 3 7-3v1.800l-7 3-7-3z" fill="#c06878"/><path d="M1 8l7-3 7 3-7 3z" fill="#e89aa8"/><path d="M2.500 8l5.500-2.300 5.500 2.300" fill="none" stroke="#fff" stroke-opacity=".45" stroke-width=".6"/><path d="M1 5l7 3 7-3v1.800l-7 3-7-3z" fill="#0d8a84"/><path d="M1 5l7-3 7 3-7 3z" fill="#20b8b0"/><path d="M2.500 5l5.500-2.300 5.500 2.300" fill="none" stroke="#fff" stroke-opacity=".45" stroke-width=".6"/><path d="M10 5a2.800 2.800 0 0 1 1.500 5.200v2.300h-3v-2.300a2.800 2.800 0 0 1 1.500-5.200z" fill="#ececec" stroke="#999" stroke-width=".6"/><path d="M8.500 13.500h3" stroke="#777" stroke-width=".8"/></g><g transform="translate(263.5,978.0)"><path d="M1 11l7 3 7-3v1.800l-7 3-7-3z" fill="#0d8a84"/><path d="M1 11l7-3 7 3-7 3z" fill="#20b8b0"/><path d="M2.500 11l5.500-2.300 5.500 2.300" fill="none" stroke="#fff" stroke-opacity=".45" stroke-width=".6"/><path d="M1 8l7 3 7-3v1.800l-7 3-7-3z" fill="#c06878"/><path d="M1 8l7-3 7 3-7 3z" fill="#e89aa8"/><path d="M2.500 8l5.500-2.300 5.500 2.300" fill="none" stroke="#fff" stroke-opacity=".45" stroke-width=".6"/><path d="M1 5l7 3 7-3v1.800l-7 3-7-3z" fill="#0d8a84"/><path d="M1 5l7-3 7 3-7 3z" fill="#20b8b0"/><path d="M2.500 5l5.500-2.300 5.500 2.300" fill="none" stroke="#fff" stroke-opacity=".45" stroke-width=".6"/><path d="M7 10v-1.800a2 2 0 0 1 4 0" fill="none" stroke="#c89010" stroke-width="1.200"/><rect x="8.500" y="10" width="6" height="5" fill="#f0b020" stroke="#a07008" stroke-width=".5"/></g><g transform="translate(287.5,978.0)"><path d="M1 11l7 3 7-3v1.800l-7 3-7-3z" fill="#c06878"/><path d="M1 11l7-3 7 3-7 3z" fill="#e89aa8"/><path d="M2.500 11l5.500-2.300 5.500 2.300" fill="none" stroke="#fff" stroke-opacity=".45" stroke-width=".6"/><path d="M1 8l7 3 7-3v1.800l-7 3-7-3z" fill="#c06878"/><path d="M1 8l7-3 7 3-7 3z" fill="#e89aa8"/><path d="M2.500 8l5.500-2.300 5.500 2.300" fill="none" stroke="#fff" stroke-opacity=".45" stroke-width=".6"/><path d="M1 5l7 3 7-3v1.800l-7 3-7-3z" fill="#c06878"/><path d="M1 5l7-3 7 3-7 3z" fill="#e89aa8"/><path d="M2.500 5l5.500-2.300 5.500 2.300" fill="none" stroke="#fff" stroke-opacity=".45" stroke-width=".6"/><path d="M7 10v-1.800a2 2 0 0 1 4 0" fill="none" stroke="#c89010" stroke-width="1.200"/><rect x="8.500" y="10" width="6" height="5" fill="#f0b020" stroke="#a07008" stroke-width=".5"/></g><g transform="translate(319.0,978.0)"><path d="M1 11l7 3 7-3v1.800l-7 3-7-3z" fill="#0d8a84"/><path d="M1 11l7-3 7 3-7 3z" fill="#20b8b0"/><path d="M2.500 11l5.500-2.300 5.500 2.300" fill="none" stroke="#fff" stroke-opacity=".45" stroke-width=".6"/><path d="M1 8l7 3 7-3v1.800l-7 3-7-3z" fill="#0d8a84"/><path d="M1 8l7-3 7 3-7 3z" fill="#20b8b0"/><path d="M2.500 8l5.500-2.300 5.500 2.300" fill="none" stroke="#fff" stroke-opacity=".45" stroke-width=".6"/><path d="M1 5l7 3 7-3v1.800l-7 3-7-3z" fill="#0d8a84"/><path d="M1 5l7-3 7 3-7 3z" fill="#20b8b0"/><path d="M2.500 5l5.500-2.300 5.500 2.300" fill="none" stroke="#fff" stroke-opacity=".45" stroke-width=".6"/><path d="M10 5a2.800 2.800 0 0 1 1.500 5.200v2.300h-3v-2.300a2.800 2.800 0 0 1 1.500-5.200z" fill="#fff0a0" stroke="#b09020" stroke-width=".6"/><path d="M8.500 13.500h3" stroke="#777" stroke-width=".8"/></g><g transform="translate(343.0,978.0)"><path d="M1 11l7 3 7-3v1.800l-7 3-7-3z" fill="#0d8a84"/><path d="M1 11l7-3 7 3-7 3z" fill="#20b8b0"/><path d="M2.500 11l5.500-2.300 5.500 2.300" fill="none" stroke="#fff" stroke-opacity=".45" stroke-width=".6"/><path d="M1 8l7 3 7-3v1.800l-7 3-7-3z" fill="#0d8a84"/><path d="M1 8l7-3 7 3-7 3z" fill="#20b8b0"/><path d="M2.500 8l5.500-2.300 5.500 2.300" fill="none" stroke="#fff" stroke-opacity=".45" stroke-width=".6"/><path d="M1 5l7 3 7-3v1.800l-7 3-7-3z" fill="#0d8a84"/><path d="M1 5l7-3 7 3-7 3z" fill="#20b8b0"/><path d="M2.500 5l5.500-2.300 5.500 2.300" fill="none" stroke="#fff" stroke-opacity=".45" stroke-width=".6"/><path d="M10 5a2.800 2.800 0 0 1 1.500 5.200v2.300h-3v-2.300a2.800 2.800 0 0 1 1.500-5.200z" fill="#ececec" stroke="#999" stroke-width=".6"/><path d="M8.500 13.500h3" stroke="#777" stroke-width=".8"/></g><g transform="translate(374.5,978.0)"><path d="M1 11l7 3 7-3v1.800l-7 3-7-3z" fill="#0d8a84"/><path d="M1 11l7-3 7 3-7 3z" fill="#20b8b0"/><path d="M2.500 11l5.500-2.300 5.500 2.300" fill="none" stroke="#fff" stroke-opacity=".45" stroke-width=".6"/><path d="M1 8l7 3 7-3v1.800l-7 3-7-3z" fill="#0d8a84"/><path d="M1 8l7-3 7 3-7 3z" fill="#20b8b0"/><path d="M2.500 8l5.500-2.300 5.500 2.300" fill="none" stroke="#fff" stroke-opacity=".45" stroke-width=".6"/><path d="M1 5l7 3 7-3v1.800l-7 3-7-3z" fill="#5a9a92"/><path d="M1 5l7-3 7 3-7 3z" fill="#88c8c0"/><path d="M2.500 5l5.500-2.300 5.500 2.300" fill="none" stroke="#fff" stroke-opacity=".45" stroke-width=".6"/><circle cx="10.500" cy="11" r="3.500" fill="#ffd830" stroke="#e0a010" stroke-width=".8"/><path d="M10.500 5.500v11M5 11h11M6.500 7l8 8M14.500 7l-8 8" stroke="#f0c020" stroke-width=".8"/></g><g transform="translate(397.5,978.0)"><path d="M1 11l7 3 7-3v1.800l-7 3-7-3z" fill="#0d8a84"/><path d="M1 11l7-3 7 3-7 3z" fill="#20b8b0"/><path d="M2.500 11l5.500-2.300 5.500 2.300" fill="none" stroke="#fff" stroke-opacity=".45" stroke-width=".6"/><path d="M1 8l7 3 7-3v1.800l-7 3-7-3z" fill="#0d8a84"/><path d="M1 8l7-3 7 3-7 3z" fill="#20b8b0"/><path d="M2.500 8l5.500-2.300 5.500 2.300" fill="none" stroke="#fff" stroke-opacity=".45" stroke-width=".6"/><path d="M1 5l7 3 7-3v1.800l-7 3-7-3z" fill="#0d8a84"/><path d="M1 5l7-3 7 3-7 3z" fill="#20b8b0"/><path d="M2.500 5l5.500-2.300 5.500 2.300" fill="none" stroke="#fff" stroke-opacity=".45" stroke-width=".6"/><path d="M8 3v10M3.500 5.500l9 5M12.500 5.500l-9 5" stroke="#fff" stroke-width="1.800"/><path d="M8 3v10M3.500 5.500l9 5M12.500 5.500l-9 5" stroke="#8ad" stroke-width=".6"/></g><g transform="translate(428.5,978.0)"><path d="M1 11l7 3 7-3v1.800l-7 3-7-3z" fill="#0d8a84"/><path d="M1 11l7-3 7 3-7 3z" fill="#20b8b0"/><path d="M2.500 11l5.500-2.300 5.500 2.300" fill="none" stroke="#fff" stroke-opacity=".45" stroke-width=".6"/><path d="M1 8l7 3 7-3v1.800l-7 3-7-3z" fill="#0d8a84"/><path d="M1 8l7-3 7 3-7 3z" fill="#20b8b0"/><path d="M2.500 8l5.500-2.300 5.500 2.300" fill="none" stroke="#fff" stroke-opacity=".45" stroke-width=".6"/><path d="M1 5l7 3 7-3v1.800l-7 3-7-3z" fill="#0d8a84"/><path d="M1 5l7-3 7 3-7 3z" fill="#20b8b0"/><path d="M2.500 5l5.500-2.300 5.500 2.300" fill="none" stroke="#fff" stroke-opacity=".45" stroke-width=".6"/><path d="M7 10v-1.800a2 2 0 0 1 4 0" fill="none" stroke="#c89010" stroke-width="1.200"/><rect x="8.500" y="10" width="6" height="5" fill="#f0b020" stroke="#a07008" stroke-width=".5"/></g><g transform="translate(452.0,978.0)"><path d="M1 11l7 3 7-3v1.800l-7 3-7-3z" fill="#0d8a84"/><path d="M1 11l7-3 7 3-7 3z" fill="#20b8b0"/><path d="M2.500 11l5.500-2.300 5.500 2.300" fill="none" stroke="#fff" stroke-opacity=".45" stroke-width=".6"/><path d="M1 8l7 3 7-3v1.800l-7 3-7-3z" fill="#0d8a84"/><path d="M1 8l7-3 7 3-7 3z" fill="#20b8b0"/><path d="M2.500 8l5.500-2.300 5.500 2.300" fill="none" stroke="#fff" stroke-opacity=".45" stroke-width=".6"/><path d="M1 5l7 3 7-3v1.800l-7 3-7-3z" fill="#0d8a84"/><path d="M1 5l7-3 7 3-7 3z" fill="#20b8b0"/><path d="M2.500 5l5.500-2.300 5.500 2.300" fill="none" stroke="#fff" stroke-opacity=".45" stroke-width=".6"/><path d="M9.500 10v-1.800a2 2 0 0 1 4 0v1.800" fill="none" stroke="#c89010" stroke-width="1.200"/><rect x="8.500" y="10" width="6" height="5" fill="#f0b020" stroke="#a07008" stroke-width=".5"/></g><g transform="translate(483.0,978.0)"><path d="M1 11l7 3 7-3v1.800l-7 3-7-3z" fill="#0d8a84"/><path d="M1 11l7-3 7 3-7 3z" fill="#20b8b0"/><path d="M2.500 11l5.500-2.300 5.500 2.300" fill="none" stroke="#fff" stroke-opacity=".45" stroke-width=".6"/><path d="M1 8l7 3 7-3v1.800l-7 3-7-3z" fill="#c06878"/><path d="M1 8l7-3 7 3-7 3z" fill="#e89aa8"/><path d="M2.500 8l5.500-2.300 5.500 2.300" fill="none" stroke="#fff" stroke-opacity=".45" stroke-width=".6"/><path d="M1 5l7 3 7-3v1.800l-7 3-7-3z" fill="#000"/><path d="M1 5l7-3 7 3-7 3z" fill="#111"/><path d="M2.500 5l5.500-2.300 5.500 2.300" fill="none" stroke="#fff" stroke-opacity=".45" stroke-width=".6"/><path d="M3 9c0-4 4-6 7-4" stroke="#111" stroke-width="2" fill="none"/></g><g transform="translate(507.0,978.0)"><path d="M1 11l7 3 7-3v1.800l-7 3-7-3z" fill="#0d8a84"/><path d="M1 11l7-3 7 3-7 3z" fill="#20b8b0"/><path d="M2.500 11l5.500-2.300 5.500 2.300" fill="none" stroke="#fff" stroke-opacity=".45" stroke-width=".6"/><path d="M1 8l7 3 7-3v1.800l-7 3-7-3z" fill="#000"/><path d="M1 8l7-3 7 3-7 3z" fill="#111"/><path d="M2.500 8l5.500-2.300 5.500 2.300" fill="none" stroke="#fff" stroke-opacity=".45" stroke-width=".6"/><path d="M1 5l7 3 7-3v1.800l-7 3-7-3z" fill="#a89a10"/><path d="M1 5l7-3 7 3-7 3z" fill="#f0e020"/><path d="M2.500 5l5.500-2.300 5.500 2.300" fill="none" stroke="#fff" stroke-opacity=".45" stroke-width=".6"/><circle cx="12" cy="3" r="2.200" fill="#fff" stroke="#111"/><path d="M3 12l7-7" stroke="#111" stroke-width="2.500"/></g><g transform="translate(553.0,978.0)"><circle cx="6" cy="6" r="4.500" fill="#2868c0" stroke="#124"/><path d="M3 5c2-1 4 1 6 0" stroke="#6c6" stroke-width="1.500" fill="none"/><rect x="7" y="7" width="7" height="6" fill="#9cc8b8" stroke="#1d4d3a"/><circle cx="5" cy="12" r="3" fill="#e8a8c0" stroke="#845"/></g><g transform="translate(577.0,978.0)"><rect x="1" y="1" width="14" height="14" fill="#fff" stroke="#999" stroke-width=".7"/><path d="M1 6c5-4 9-4 14 0M1 14c5-4 9-4 14 0" stroke="#e07030" fill="none" stroke-width=".9"/><text x="8" y="11.500" font-family="Liberation Sans,sans-serif" font-weight="bold" font-size="8" text-anchor="middle" fill="#4050e0">10</text></g><g transform="translate(601.0,978.0)"><circle cx="10" cy="5.500" r="4.500" fill="#8098d8" stroke="#567"/><path d="M8 3l4 5M12 3l-4 5" stroke="#eef" stroke-width=".8"/><path d="M1 8h7v2h-7z" fill="#e02020"/><path d="M4 9l1 6h4" fill="none" stroke="#e02020" stroke-width="1.200"/><circle cx="11" cy="5" r="1.500" fill="#f0d060"/></g><g transform="translate(647.2,977.2) scale(1.1)"><path d="M1.500 5l4-3h9v8l-4 4h-9z" fill="#7fa896" stroke="#3a6a54" stroke-width=".7"/><path d="M1.500 5h9v9" fill="none" stroke="#c8dcd2" stroke-width=".8"/><path d="M1.500 5l4-3h9l-4 3z" fill="#b8d0c4"/><path d="M10.500 5l4-3v8l-4 4z" fill="#5a8c74"/></g><g transform="translate(669.7,977.2) scale(1.1)"><circle cx="8" cy="8" r="6.800" fill="#6e9c86" stroke="#3a6a54" stroke-width=".6"/><circle cx="6" cy="5.500" r="3.500" fill="#c8dcd2" fill-opacity=".8"/><circle cx="5.500" cy="5" r="1.700" fill="#eef5f1"/></g><g transform="translate(692.7,977.2) scale(1.1)"><path d="M2 4v9c0 3 12 3 12 0v-9z" fill="#7fa896" stroke="#3a6a54" stroke-width=".6"/><path d="M5 5v10" stroke="#d8e8e0" stroke-width="3" stroke-opacity=".7"/><ellipse cx="8" cy="4" rx="6" ry="2.300" fill="#cfe0d8" stroke="#3a6a54" stroke-width=".6"/></g><g transform="translate(715.7,977.2) scale(1.1)"><path d="M8 1l6 12c0 3-12 3-12 0z" fill="#7fa896" stroke="#3a6a54" stroke-width=".6"/><path d="M8 1l-2.500 13" stroke="#d8e8e0" stroke-width="2.200" stroke-opacity=".7"/></g><g transform="translate(739.2,977.2) scale(1.1)"><path d="M1 12l9-9 5 2v7l-9 3z" fill="#9cbcac" stroke="#3a6a54" stroke-width=".6"/><path d="M1 12l9-9 5 2-9 10z" fill="#dce9e3"/><path d="M6 15l9-10v7z" fill="#5a8c74"/></g><g transform="translate(762.7,977.2) scale(1.1)"><ellipse cx="8" cy="7.500" rx="7" ry="6" fill="#7fa896" stroke="#3a6a54" stroke-width=".6"/><ellipse cx="6.500" cy="5.500" rx="4" ry="2.500" fill="#c8dcd2" fill-opacity=".7"/><ellipse cx="8.500" cy="8" rx="2.800" ry="2.200" fill="#3a6a54"/><ellipse cx="9" cy="8.600" rx="2" ry="1.500" fill="#a8c4b6"/></g><g transform="translate(784.2,977.2) scale(1.1)"><path d="M8 1l6 10-5 4-7-4z" fill="#7fa896" stroke="#3a6a54" stroke-width=".6"/><path d="M8 1l1 14-7-4z" fill="#c8dcd2"/><path d="M8 1l-2 12" stroke="#eef5f1" stroke-width=".8"/></g><g transform="translate(808.2,977.2) scale(1.1)"><path d="M2 3c4-2 8-2 12 0c-4 2-8 2-12 0M2 6c4-2 8-2 12 0c-4 2-8 2-12 0M2 9c4-2 8-2 12 0c-4 2-8 2-12 0M2 12c4-2 8-2 12 0c-4 2-8 2-12 0M2 14.500c4-2 8-2 12 0" fill="none" stroke="#333" stroke-width="1"/></g><g transform="translate(840.5,978.0)"><path d="M2.500 14v-11" stroke="#1d4d3a" stroke-width="1.500"/><path d="M2.500 0l-2 3.500h4z" fill="#1d4d3a"/><path d="M5 6l2-2h7v8l-2 3h-7z" fill="#f0f4f2" stroke="#111" stroke-width="1.300"/><path d="M5 6h7v9M12 6l2-2M7 4v8l-2 3M7 12h7" stroke="#111" fill="none" stroke-width="1"/></g><g transform="translate(863.5,978.0)"><path d="M2 5l3-3h9v3h-6v6h6v2l-3 2h-9z" fill="#5d9078" stroke="#1d4d3a" stroke-width=".8"/><path d="M13 6a5 5 0 1 0 1 5" stroke="#1d4d3a" stroke-width="1.500" fill="none"/><path d="M11 3l4 1-1 4z" fill="#1d4d3a"/></g><g transform="translate(895.5,978.0)"><path d="M1 15l9-10" stroke="#c84060" stroke-width="1.800"/><path d="M8 4l3-3 1 5 3 2-3 1z" fill="#888" stroke="#444" stroke-width=".6"/><path d="M8 9h6v6h-6z" fill="#7fa896" stroke="#3a6a54" stroke-width=".6"/><path d="M8 9l2-2h6l-2 2" fill="#b8d0c4" stroke="#3a6a54" stroke-width=".5"/></g><g transform="translate(918.0,978.0)"><path d="M1 8l5-5v3h5l4 2-4 3h-5v3z" fill="#3f8a62" stroke="#1d4d3a" stroke-width=".7"/><ellipse cx="11" cy="8" rx="2" ry="4" fill="#2a6a48"/></g><g transform="translate(940.5,978.0)"><path d="M3 3l5-2 5 2v10l-5 2-5-2z" fill="#3f8a62" stroke="#1d4d3a" stroke-width=".7"/><path d="M3 5.500l5 2 5-2M3 8.500l5 2 5-2M3 11l5 2 5-2" stroke="#a8d0bc" fill="none" stroke-width=".8"/><path d="M10 6h5v4h-5z" fill="#2a6a48"/></g><g transform="translate(1295.0,978.0)"><rect x="5" y="2" width="8" height="12" fill="#c8f0a0" stroke="#111" stroke-dasharray="1.500 1" stroke-width="1"/><rect x="7" y="5" width="4" height="5" fill="#60a020" stroke="#111" stroke-width=".7"/><path d="M1 6l4 4M5 6l-4 4M3 5v6M0 8h6" stroke="#6ac" stroke-width=".8"/></g><g transform="translate(1320.0,978.0)"><rect x="6" y="2" width="8" height="12" fill="#c8f0a0" stroke="#111" stroke-dasharray="1.500 1" stroke-width="1"/><rect x="8" y="5" width="4" height="5" fill="#60a020" stroke="#111" stroke-width=".7"/><path d="M1 2l7 8" stroke="#e0b020" stroke-width="2.200"/><path d="M1 2l2 .5" stroke="#c03030" stroke-width="2.200"/></g><g transform="translate(1345.0,978.0)"><rect x="6" y="2" width="8" height="12" fill="#c8f0a0" stroke="#111" stroke-dasharray="1.500 1" stroke-width="1"/><rect x="8" y="5" width="4" height="5" fill="#60a020" stroke="#111" stroke-width=".7"/><path d="M0 5h5M2.500 2.500v5" stroke="#e01010" stroke-width="1.800"/></g><g transform="translate(1368.0,978.0)"><rect x="6" y="2" width="8" height="12" fill="#c8f0a0" stroke="#111" stroke-dasharray="1.500 1" stroke-width="1"/><rect x="8" y="5" width="4" height="5" fill="#60a020" stroke="#111" stroke-width=".7"/><path d="M0 5h5" stroke="#e01010" stroke-width="1.800"/></g><g transform="translate(330.0,262.0)"><path d="M8 7a2.500 2.500 0 0 1 3-4a3 3 0 0 1 5 2a2.500 2.500 0 0 1-2 4z" fill="#fff" stroke="#68887a" stroke-width="1"/><path d="M2 8h6v6h-6z" fill="#cfe0d8" stroke="#111" stroke-width="1.200"/><path d="M4 12l4-4M8 8h-2.500M8 8v2.500" stroke="#111" stroke-width="1"/></g><g transform="translate(350.0,262.0)"><path d="M5 12a3 3 0 0 1-1-5.500a3.500 3.500 0 0 1 6-2.500a3 3 0 0 1 4 3.500a3 3 0 0 1-2 5a3.500 3.500 0 0 1-5 .5a2.500 2.500 0 0 1-2-1z" fill="#fff" stroke="#68887a" stroke-width="1"/></g><g transform="translate(1015.7,862.2) scale(1.1)"><path d="M1 2h14v4h-12z" fill="#cfe0d8" stroke="#111"/><path d="M3 6h12l-3 4h-6z" fill="#f4f7f5" stroke="#111"/><path d="M6 10h6v5z" fill="#fff" stroke="#111"/></g><g transform="translate(1038.7,862.2) scale(1.1)"><path d="M1 6l4-3 10 7-4 3z" fill="#e8efeb" stroke="#444" stroke-width=".8"/><path d="M1 6v2l10 7v-2M11 15l4-3v-2" fill="none" stroke="#444" stroke-width=".8"/></g><g transform="translate(1070.7,862.2) scale(1.1)"><path d="M1.500 2.500h8l5 3v9h-8l-5-3z" fill="#fff" stroke="#111" stroke-width="1.300"/><path d="M1.500 2.500l5 3h8M6.500 5.500v9M9.500 2.500v9l5 3M1.500 11.500h8" fill="none" stroke="#111" stroke-width=".9"/></g><g transform="translate(1093.7,862.2) scale(1.1)"><path d="M1 14l10-12h4v9l-4 3z" fill="#fff" stroke="#111" stroke-width="1.200"/><path d="M11 2v12M1 14l4-3h10M5 11l10-9" fill="none" stroke="#111" stroke-width=".8"/></g><g transform="translate(1117.2,862.2) scale(1.1)"><path d="M8 1l6 11-5 3-7-4z" fill="#fff" stroke="#444" stroke-width=".9"/><path d="M8 1l1 14M8 1v9l-6 1M8 10l6 2" fill="none" stroke="#444" stroke-width=".7"/></g><g transform="translate(1140.2,862.2) scale(1.1)"><path d="M8 1l6 12c0 2.500-12 2.500-12 0z" fill="#fff" stroke="#111" stroke-width="1"/><path d="M2 13c0-2 12-2 12 0" fill="none" stroke="#111" stroke-width=".7"/></g><g transform="translate(1163.2,862.2) scale(1.1)"><circle cx="8" cy="8" r="6.800" fill="#fff" stroke="#333" stroke-width="1"/><path d="M8 1.200c-4 3-4 10 0 13.600M8 1.200c4 3 4 10 0 13.600M1.200 8c3 3 10 3 13.600 0M3 4l10 8" fill="none" stroke="#333" stroke-width=".7"/></g><g transform="translate(1186.2,862.2) scale(1.1)"><ellipse cx="8" cy="8" rx="7" ry="5.500" fill="#fff" stroke="#333" stroke-width="1" transform="rotate(-25 8 8)"/><ellipse cx="8.500" cy="6" rx="5" ry="2.800" fill="#e8efeb" stroke="#333" stroke-width=".8" transform="rotate(-25 8 6)"/><path d="M3 11c3 2 7 1 10-2" fill="none" stroke="#333" stroke-width=".7"/></g><g transform="translate(1208.7,862.2) scale(1.1)"><ellipse cx="8" cy="8" rx="7" ry="4.500" fill="#fff" stroke="#333" stroke-width="1" transform="rotate(-30 8 8)"/><path d="M2 11c3 3 9 1 12-5M4 6l8 6M6 4l7 5" fill="none" stroke="#555" stroke-width=".7"/></g><g transform="translate(1232.2,862.2) scale(1.1)"><circle cx="8" cy="8" r="6.800" fill="#fff" stroke="#333" stroke-width="1"/><circle cx="8" cy="8" r="2.800" fill="#e8efeb" stroke="#333" stroke-width=".8"/><path d="M8 1v4M8 11v4M1 8h4M11 8h4M3 3l3 3M13 3l-3 3M3 13l3-3M13 13l-3-3" stroke="#555" stroke-width=".7"/></g><g transform="translate(1263.7,862.2) scale(1.1)"><path d="M1 9l8-7 6 4-7 8z" fill="#eef5f1" stroke="#111" stroke-width="1.100"/><path d="M5 5.500l6.500 4.500M4.500 11.500l7.500-7.500" stroke="#1d4d3a" stroke-width=".9"/></g><g transform="translate(1286.7,862.2) scale(1.1)"><path d="M1 8l7-6 7 6-7 6z" fill="#eef5f1" stroke="#111" stroke-width="1.100"/><path d="M4.500 5l7 6M11.500 5l-7 6M3 6.500l7 6M13 6.500l-7 6M6 3.500l7 6M10 3.500l-7 6" stroke="#1d4d3a" stroke-width=".6"/></g><g transform="translate(1318.7,862.2) scale(1.1)"><path d="M8 1.500a6.500 6.500 0 1 0 0 13" fill="#e8efeb" stroke="#111" stroke-width="1.300"/><circle cx="10.500" cy="4" r="2.500" fill="#fff" stroke="#111" stroke-width="1.200"/><circle cx="10.500" cy="12" r="2.500" fill="#fff" stroke="#111" stroke-width="1.200"/><path d="M2 8h8M8 2v12" stroke="#1d4d3a" stroke-width=".8"/></g><g transform="translate(1342.2,862.2) scale(1.1)"><path d="M1 2c3 2 5-1 8 0c-2 4 2 8 0 12c-3-1-5 2-8 0c2-4-2-8 0-12z" fill="#9cc8b0" stroke="#1d4d3a" stroke-width="1"/><path d="M11 2c-2 4 2 8 0 12M14.500 2c-2 4 2 8 0 12" fill="none" stroke="#111" stroke-width="1.200"/></g><g transform="translate(1365.2,862.2) scale(1.1)"><path d="M1 3l8-2 6 5-3 9z" fill="#cfe0d8" stroke="#333" stroke-width="1"/><path d="M12 15l-7-10M12 15l-3-12M12 15l1-10M1 3l11 12" fill="none" stroke="#333" stroke-width=".6"/></g><g transform="translate(1388.7,862.2) scale(1.1)"><path d="M2 4l5-3 2 6 5-1-1 8-7-2z" fill="#fff" stroke="#111" stroke-width="1.100"/><path d="M7 1l-1 11M9 7l-3 5" fill="none" stroke="#111" stroke-width=".7"/></g><g transform="translate(1427.2,860.2) scale(1.1)"><path d="M4 2l8-1 3 2-8 1z" fill="#cfe0d8" stroke="#68887a" stroke-width=".5"/><rect x="2.500" y="4.500" width="10" height="10" fill="#eef" stroke="#223" stroke-width="1"/><rect x="2.500" y="4.500" width="10" height="2.500" fill="#223"/><path d="M4.500 9.500h1.500M7 9.500h4M4.500 12h1.500M7 12h4" stroke="#223" stroke-width="1.200"/></g><g transform="translate(1450.7,860.2) scale(1.1)"><path d="M1 11l7-3 7 3-7 3.500z" fill="#801010"/><path d="M1 9l7-3 7 3-7 3.500z" fill="#d02020"/><path d="M1 7l7-3 7 3-7 3.500z" fill="#801010"/><path d="M2 6.500l6-2.500 6 2.500-6 3z" fill="#d02020"/><path d="M8 3v7.500" stroke="#111" stroke-width="2.200"/><path d="M8 .5l-3 3.500h6z" fill="#111"/><path d="M9.200 4v6" stroke="#fff" stroke-width=".7"/></g><g transform="translate(1473.7,860.2) scale(1.1)"><path d="M1 11l7-3 7 3-7 3.500z" fill="#0a6a0a"/><path d="M1 9l7-3 7 3-7 3.500z" fill="#20b020"/><path d="M1 7l7-3 7 3-7 3.500z" fill="#0a6a0a"/><path d="M2 6.500l6-2.500 6 2.500-6 3z" fill="#20b020"/><path d="M8 3v7.500" stroke="#111" stroke-width="2.200"/><path d="M8 .5l-3 3.500h6z" fill="#111"/><path d="M9.200 4v6" stroke="#fff" stroke-width=".7"/></g><g transform="translate(1496.7,860.2) scale(1.1)"><path d="M1 11l7-3 7 3-7 3.500z" fill="#8a8408"/><path d="M1 9l7-3 7 3-7 3.500z" fill="#d0c820"/><path d="M1 7l7-3 7 3-7 3.500z" fill="#8a8408"/><path d="M2 6.500l6-2.500 6 2.500-6 3z" fill="#d0c820"/><path d="M8 3v7.500" stroke="#111" stroke-width="2.200"/><path d="M8 .5l-3 3.500h6z" fill="#111"/><path d="M9.200 4v6" stroke="#fff" stroke-width=".7"/></g><g transform="translate(1519.2,860.2) scale(1.1)"><path d="M1 11l7-3 7 3-7 3.500z" fill="#0a7080"/><path d="M1 9l7-3 7 3-7 3.500z" fill="#20b8c8"/><path d="M1 7l7-3 7 3-7 3.500z" fill="#0a7080"/><path d="M2 6.500l6-2.500 6 2.500-6 3z" fill="#20b8c8"/><path d="M8 3v7.500" stroke="#111" stroke-width="2.200"/><path d="M8 .5l-3 3.500h6z" fill="#111"/><path d="M9.200 4v6" stroke="#fff" stroke-width=".7"/></g><g transform="translate(1551.7,860.2) scale(1.1)"><path d="M1 11l7-3 7 3-7 3.500z" fill="#801010"/><path d="M1 9l7-3 7 3-7 3.500z" fill="#d02020"/><path d="M1 7l7-3 7 3-7 3.500z" fill="#801010"/><path d="M2 6.500l6-2.500 6 2.500-6 3z" fill="#d02020"/><path d="M8 1v7" stroke="#111" stroke-width="2.200"/><path d="M8 10.500l-3-3.500h6z" fill="#111"/><path d="M9.200 1.500v5" stroke="#fff" stroke-width=".7"/></g><g transform="translate(1575.2,860.2) scale(1.1)"><path d="M1 11l7-3 7 3-7 3.500z" fill="#0a6a0a"/><path d="M1 9l7-3 7 3-7 3.500z" fill="#20b020"/><path d="M1 7l7-3 7 3-7 3.500z" fill="#0a6a0a"/><path d="M2 6.500l6-2.500 6 2.500-6 3z" fill="#20b020"/><path d="M8 1v7" stroke="#111" stroke-width="2.200"/><path d="M8 10.500l-3-3.500h6z" fill="#111"/><path d="M9.200 1.500v5" stroke="#fff" stroke-width=".7"/></g><g transform="translate(1597.7,860.2) scale(1.1)"><path d="M1 11l7-3 7 3-7 3.500z" fill="#8a8408"/><path d="M1 9l7-3 7 3-7 3.500z" fill="#d0c820"/><path d="M1 7l7-3 7 3-7 3.500z" fill="#8a8408"/><path d="M2 6.500l6-2.500 6 2.500-6 3z" fill="#d0c820"/><path d="M8 1v7" stroke="#111" stroke-width="2.200"/><path d="M8 10.500l-3-3.500h6z" fill="#111"/><path d="M9.200 1.500v5" stroke="#fff" stroke-width=".7"/></g><g transform="translate(1620.7,860.2) scale(1.1)"><path d="M1 11l7-3 7 3-7 3.500z" fill="#0a7080"/><path d="M1 9l7-3 7 3-7 3.500z" fill="#20b8c8"/><path d="M1 7l7-3 7 3-7 3.500z" fill="#0a7080"/><path d="M2 6.500l6-2.500 6 2.500-6 3z" fill="#20b8c8"/><path d="M8 1v7" stroke="#111" stroke-width="2.200"/><path d="M8 10.500l-3-3.500h6z" fill="#111"/><path d="M9.200 1.500v5" stroke="#fff" stroke-width=".7"/></g><g transform="translate(275.0,491.0)"><path d="M3 3l10 10" stroke="#111" stroke-width="1.500"/><rect x="1.6" y="1.6" width="2.8" height="2.8" fill="#18c8c0"/><rect x="11.6" y="11.6" width="2.8" height="2.8" fill="#18c8c0"/></g><g transform="translate(275.0,518.0)"><path d="M2 2l12 12" stroke="#111" stroke-width="1.500"/><path d="M1 1l4 1.500-2.500 2.500zM15 15l-4-1.500 2.500-2.500z" fill="#111"/><rect x="6.6" y="6.6" width="2.8" height="2.8" fill="#18c8c0"/></g><g transform="translate(275.0,545.0)"><path d="M6 13a4 4 0 0 1 0-8h8" stroke="#111" stroke-width="1.500" fill="none"/><rect x="4.6" y="11.6" width="2.8" height="2.8" fill="#18c8c0"/><rect x="4.6" y="3.6" width="2.8" height="2.8" fill="#18c8c0"/><rect x="12.6" y="3.6" width="2.8" height="2.8" fill="#18c8c0"/></g><g transform="translate(275.0,572.0)"><path d="M8 2l6 4.500-2 7h-7l-2.500-7z" fill="#e4ece8" stroke="#111" stroke-width="1.400"/><rect x="12.1" y="4.6" width="2.8" height="2.8" fill="#18c8c0"/><rect x="7.1" y="1.1" width="1.8" height="1.8" fill="#e8a0d0"/><path d="M13 15.500l2.500 0 0-2.500z" fill="#111"/></g><g transform="translate(275.0,599.0)"><rect x="2" y="4" width="12" height="8" fill="#e4ece8" stroke="#111" stroke-width="1.500"/><rect x="0.6000000000000001" y="2.6" width="2.8" height="2.8" fill="#18c8c0"/><rect x="12.6" y="10.6" width="2.8" height="2.8" fill="#18c8c0"/></g><g transform="translate(275.0,626.0)"><path d="M2 3c6 0 11 4 12 11" stroke="#111" stroke-width="1.500" fill="none"/><rect x="1.1" y="2.1" width="1.8" height="1.8" fill="#e8a0d0"/><rect x="8.6" y="4.6" width="2.8" height="2.8" fill="#18c8c0"/><path d="M13 15.500l2.500 0 0-2.500z" fill="#111"/></g><g transform="translate(275.0,653.0)"><circle cx="8" cy="8" r="6.300" fill="#e4ece8" stroke="#111" stroke-width="1.500"/><path d="M8 8l4-3" stroke="#111" stroke-width=".8"/><rect x="6.7" y="6.7" width="2.6" height="2.6" fill="#18c8c0"/><path d="M13.500 16l2.500 0 0-2.500z" fill="#111"/></g><g transform="translate(275.0,680.0)"><path d="M5 12a3 3 0 0 1-1-5.500a3.500 3.500 0 0 1 6-2.500a3 3 0 0 1 4 3.500a3 3 0 0 1-2 5a3.500 3.500 0 0 1-5 .5a2.500 2.500 0 0 1-2-1z" fill="#fff" stroke="#68887a" stroke-width="1"/></g><g transform="translate(275.0,706.0)"><path d="M2 2c6 1 5 5 3 7s3 5 9 4" stroke="#111" stroke-width="1.500" fill="none"/><rect x="1.1" y="1.1" width="1.8" height="1.8" fill="#e8a0d0"/><rect x="4.6" y="7.6" width="2.8" height="2.8" fill="#18c8c0"/><rect x="12.6" y="11.6" width="2.8" height="2.8" fill="#18c8c0"/></g><g transform="translate(275.0,734.0)"><ellipse cx="8" cy="8" rx="7" ry="4.300" fill="#e4ece8" stroke="#111" stroke-width="1.400" transform="rotate(-35 8 8)"/><path d="M3 12l10-8" stroke="#111" stroke-width=".7"/><rect x="1.6" y="10.6" width="2.8" height="2.8" fill="#18c8c0"/><rect x="11.6" y="2.6" width="2.8" height="2.8" fill="#18c8c0"/><rect x="6.6" y="6.6" width="2.8" height="2.8" fill="#18c8c0"/><path d="M13.500 16l2.500 0 0-2.500z" fill="#111"/></g><g transform="translate(275.0,760.0)"><path d="M13 3a7 4.300 -35 1 0 0 9" fill="#e4ece8" stroke="#111" stroke-width="1.400"/><path d="M3 12l10-8" stroke="#111" stroke-width=".7"/><rect x="1.6" y="10.6" width="2.8" height="2.8" fill="#18c8c0"/><rect x="11.6" y="2.6" width="2.8" height="2.8" fill="#18c8c0"/><rect x="6.6" y="6.6" width="2.8" height="2.8" fill="#18c8c0"/><path d="M13.500 16l2.500 0 0-2.500z" fill="#111"/></g><g transform="translate(275.0,787.0)"><path d="M1.500 5l3-3h7v9l-3 3h-7z" fill="#cfe0d8" stroke="#1d4d3a" stroke-width=".9"/><rect x="7" y="5.500" width="8" height="5.500" fill="#f0a8d0" stroke="#111" stroke-width=".9"/><circle cx="7" cy="12.500" r="3" fill="#f0c0d8" stroke="#111" stroke-width=".9"/><rect x="13.6" y="4.1" width="2.8" height="2.8" fill="#18c8c0"/></g><g transform="translate(275.0,814.0)"><rect x="6" y="3.500" width="9" height="6" fill="#f0a8d0" stroke="#111" stroke-width="1"/><circle cx="5.500" cy="11" r="3.500" fill="#e4ece8" stroke="#111" stroke-width="1"/><rect x="13.6" y="2.1" width="2.8" height="2.8" fill="#18c8c0"/><rect x="7.6" y="9.6" width="2.8" height="2.8" fill="#18c8c0"/></g><g transform="translate(275.0,842.0)"><rect x="6.8" y="7.8" width="2.4" height="2.4" fill="#18c8c0"/></g><g transform="translate(275.0,869.0)"><rect x="3" y="3" width="10" height="10" fill="#cfe0d8"/><path d="M3 7l4-4M3 11l8-8M5 13l8-8M9 13l4-4M3 5l2-2M7 13l6-6M11 13l2-2" stroke="#1d4d3a" stroke-width=".9"/><path d="M1 3h14M1 13h14M3 1v14M13 1v14" stroke="#1d4d3a" stroke-width="1.100"/></g><g transform="translate(275.0,896.0)"><rect x="3" y="3" width="10" height="10" fill="#8fb8a4"/><path d="M1 3h14M1 13h14M3 1v14M13 1v14" stroke="#4e8a6c" stroke-width="1.100"/></g><g transform="translate(275.0,923.0)"><path d="M1.500 13.500v-6l5-5h8v11z" fill="#cfe0d8" stroke="#1d4d3a" stroke-width="1.200"/><circle cx="9" cy="9" r="2.600" fill="#9aa" stroke="#333" stroke-width=".9"/></g><g transform="translate(275.0,950.0)"><text x="8" y="15" font-family="Liberation Serif,serif" font-size="19" text-anchor="middle" fill="#111">T</text></g><g transform="translate(10.0,24.3)"><path d="M1 1h14v14h-14z" fill="#f4f4f4" stroke="#9a9a9a" stroke-width=".6"/><path d="M1 6l6-6 1.500 1-4 5z" fill="#4a5ae8"/><path d="M4 8.500h9" stroke="#999" stroke-dasharray="2 1" stroke-width=".6"/><text x="8" y="14" font-family="Liberation Sans,sans-serif" font-weight="bold" font-size="5.600" text-anchor="middle" fill="#000">DWG</text></g></svg>
<div style="left:109px;top:42px;width:221px;height:374px;background:#fbfbfb;border:1px solid #9a9a9a;box-shadow:3px 3px 4px rgba(0,0,0,.45)"></div>
<div style="left:110px;top:43px;width:26px;height:372px;background:#efefef;border-right:1px solid #dadada"></div>
<div style="left:110px;top:42px;width:48px;height:1px;background:#8b93a0"></div>
<div class="msep" style="left:140px;top:113px;width:188px;height:1px;"></div>
<div class="msep" style="left:140px;top:187px;width:188px;height:1px;"></div>
<div class="msep" style="left:140px;top:305px;width:188px;height:1px;"></div>
<div class="msep" style="left:140px;top:335px;width:188px;height:1px;"></div>
<div class="msep" style="left:140px;top:365px;width:188px;height:1px;"></div>
<div style="left:111px;top:311px;width:217px;height:21px;background:linear-gradient(#fffae0 0%,#fff0bc 30%,#ffe592 47%,#ffd04a 52%,#ffd458 78%,#ffe48c 100%);border:1px solid #ecd28c;border-radius:2px"></div>
<div class="t" style="left:141px;top:49.5px;font-size:11.5px;letter-spacing:-0.36px;color:#3c3c3c">Przerysuj</div>
<div class="t" style="left:141px;top:71.5px;font-size:11.5px;letter-spacing:-0.042px;color:#3c3c3c">Regeneruj</div>
<div class="t" style="left:141px;top:93.5px;font-size:11.5px;letter-spacing:-0.084px;color:#3c3c3c">Regeneruj wszystko</div>
<div class="t" style="left:141px;top:123.5px;font-size:11.5px;letter-spacing:-0.172px;color:#3c3c3c">Powiększ</div>
<div class="marr" style="left:320px;top:125px;width:0px;height:0px;"></div>
<div class="t" style="left:141px;top:145.5px;font-size:11.5px;letter-spacing:-0.008px;color:#3c3c3c">Przesunięcie widoku</div>
<div class="t" style="left:141px;top:167.5px;font-size:11.5px;letter-spacing:0.042px;color:#3c3c3c">3D Orbita</div>
<div class="marr" style="left:320px;top:169px;width:0px;height:0px;"></div>
<div class="t" style="left:141px;top:197.5px;font-size:11.5px;letter-spacing:0.079px;color:#3c3c3c">Funkcje rzutni</div>
<div class="marr" style="left:320px;top:199px;width:0px;height:0px;"></div>
<div class="t" style="left:141px;top:219.5px;font-size:11.5px;letter-spacing:0.007px;color:#3c3c3c">Nazwane widoki - Explorer...</div>
<div class="t" style="left:141px;top:241.5px;font-size:11.5px;letter-spacing:0.155px;color:#3c3c3c">3D Widoki</div>
<div class="marr" style="left:320px;top:243px;width:0px;height:0px;"></div>
<div class="t" style="left:141px;top:263.5px;font-size:11.5px;letter-spacing:-0.002px;color:#3c3c3c">Dynamiczny widok</div>
<div class="t" style="left:141px;top:285.5px;font-size:11.5px;letter-spacing:0.035px;color:#3c3c3c">Domyślne widoki...</div>
<div class="t" style="left:141px;top:315.5px;font-size:11.5px;letter-spacing:-0.044px;color:#3c3c3c">Styl wizualny</div>
<div class="marr" style="left:320px;top:317px;width:0px;height:0px;"></div>
<div class="t" style="left:141px;top:345.5px;font-size:11.5px;letter-spacing:-0.12px;color:#3c3c3c">Render</div>
<div class="marr" style="left:320px;top:347px;width:0px;height:0px;"></div>
<div class="t" style="left:141px;top:375.5px;font-size:11.5px;letter-spacing:0.017px;color:#3c3c3c">Wyświetl</div>
<div class="marr" style="left:320px;top:377px;width:0px;height:0px;"></div>
<div class="t" style="left:141px;top:397.5px;font-size:11.5px;letter-spacing:-0.21px;color:#3c3c3c">Paski narzędzi...</div>
<div style="left:328px;top:308px;width:187px;height:124px;background:#fbfbfb;border:1px solid #9a9a9a;box-shadow:3px 3px 4px rgba(0,0,0,.45)"></div>
<div style="left:329px;top:309px;width:26px;height:122px;background:#efefef;border-right:1px solid #dadada"></div>
<div style="left:330px;top:312px;width:183px;height:20px;background:linear-gradient(#fffae0 0%,#fff0bc 30%,#ffe592 47%,#ffd04a 52%,#ffd458 78%,#ffe48c 100%);border:1px solid #ecd28c;border-radius:2px"></div>
<div class="msep" style="left:359px;top:336px;width:154px;height:1px;"></div>
<div class="t" style="left:360.5px;top:316.5px;font-size:11.5px;letter-spacing:0.004px;color:#3c3c3c">Model szkieletowy 2D</div>
<div class="t" style="left:360.5px;top:346.5px;font-size:11.5px;letter-spacing:-0.12px;color:#3c3c3c">Szkieletowy</div>
<div class="t" style="left:360.5px;top:368.5px;font-size:11.5px;letter-spacing:-0.206px;color:#3c3c3c">Ukryte</div>
<div class="t" style="left:360.5px;top:390.5px;font-size:11.5px;letter-spacing:-0.442px;color:#3c3c3c">Rzeczywisty</div>
<div class="t" style="left:360.5px;top:412.5px;font-size:11.5px;letter-spacing:-0.293px;color:#3c3c3c">Koncepcyjny</div>
<svg style="position:absolute;left:0;top:0" width="1680" height="1020"><g transform="translate(115.0,47.0)"><path d="M1 1l2.500 0 8 9-2 1.500z" fill="#e020d0" stroke="#801078" stroke-width=".5"/><path d="M9.500 10l2 1.500 0 1.500z" fill="#aaa"/><path d="M15 4l-11 11" stroke="#555" stroke-width="1.100"/></g><g transform="translate(115.0,69.0)"><rect x="2" y="3" width="11" height="11" fill="#dfe8e3" stroke="#111" stroke-width="1.3"/><path d="M2 14l5.5-5.5L13 3z" fill="#9fb8ac"/><line x1="1" y1="15" x2="15" y2="1" stroke="#111" stroke-width="1.3"/><line x1="2" y1="14.5" x2="14.5" y2="2" stroke="#18c8c0" stroke-width=".7"/><path d="M13 15.5l2.500 0 0-2.500z" fill="#111"/></g><g transform="translate(115.0,91.0)"><rect x="2" y="2" width="5" height="5" fill="#e020d0"/><rect x="8" y="2" width="5" height="5" fill="#e020d0"/><rect x="2" y="8" width="5" height="5" fill="#e020d0"/><rect x="8" y="8" width="5" height="5" fill="#fff" stroke="#111" stroke-dasharray="1 1"/><path d="M2 2h11v11h-11z" fill="none" stroke="#111"/><line x1="1" y1="15" x2="15" y2="1" stroke="#111" stroke-width="1.300"/><line x1="2" y1="14.500" x2="14.500" y2="2" stroke="#18c8c0" stroke-width=".7"/><path d="M1 16.500h15" stroke="#111"/></g><g transform="translate(115.0,143.0)"><path d="M6 9l2-6 1.500 0 0 4 1-5 1.500 0 0 5 1-4 1.300.4-.5 5 1-2.500 1.200.600-1.500 6-5 2z" fill="#d8a8a0" stroke="#a06860" stroke-width=".5"/><path d="M1 13l3-4 3 2-2 4h-4z" fill="#1e5c40"/><path d="M12.500 10.500v5M10 13h5" stroke="#1d4d3a" stroke-width="1.100"/><path d="M12.500 10l-1.200 1.500h2.400zM12.500 16l-1.200-1.500h2.400zM9.500 13l1.500-1.200v2.400zM15.500 13l-1.500-1.200v2.400z" fill="#1d4d3a"/></g><g transform="translate(115.0,217.0)"><path d="M3 4l2-3h8v8" fill="#f4f7f5" stroke="#1d4d3a" stroke-width=".9"/><path d="M1.500 5.500h10v9h-10z" fill="#cfe0d8" stroke="#1d4d3a" stroke-width="1.100"/><rect x="3" y="7" width="7" height="3" fill="#5d9078"/><rect x="3.500" y="11" width="6" height="3" fill="#fff" stroke="#1d4d3a" stroke-width=".6"/><path d="M10 9l5 6" stroke="#c8508c" stroke-width="1.500"/></g><g transform="translate(115.0,283.0)"><path d="M1.500 4.500l3-3h10v10l-3 3h-10z" fill="#e8e8e8" stroke="#888" stroke-width="1"/><path d="M1.500 4.500h10v10M11.500 4.500l3-3M4.500 1.500v10l-3 3M4.500 11.500h10" stroke="#999" fill="none" stroke-width=".8"/></g><g transform="translate(334.0,314.0)"><circle cx="5" cy="11" r="4" fill="#fff" fill-opacity=".6" stroke="#1d4d3a" stroke-width="1.200"/><rect x="6.500" y="1.500" width="9" height="8" fill="#fff" fill-opacity=".85" stroke="#1d4d3a" stroke-width="1.200"/></g><g transform="translate(334.0,344.0)"><circle cx="8" cy="8" r="7.300" fill="#fff" stroke="#1d4d3a" stroke-width="1.300"/><path d="M3.500 2.800L8 7L12.500 2.800M8 7L2.700 12.500M8 7L13.300 12.500" fill="none" stroke="#1d4d3a" stroke-width="1.200"/><path d="M4.500 13.500l3.500-3.500 3.500 3.500" fill="none" stroke="#a8ccb8" stroke-width="1.200"/></g><g transform="translate(334.0,366.0)"><circle cx="8" cy="8" r="7.300" fill="#fff" stroke="#1d4d3a" stroke-width="1.300"/><path d="M3.500 2.800L8 7L12.500 2.800M8 7L2.700 12.500M8 7L13.300 12.500" fill="none" stroke="#1d4d3a" stroke-width="1.200"/></g><g transform="translate(334.0,388.0)"><circle cx="8" cy="8" r="7.300" fill="#8ab89a" stroke="#6ea684" stroke-width="1"/><circle cx="8" cy="9" r="4" fill="#7cae8e"/></g><g transform="translate(334.0,410.0)"><circle cx="8" cy="8" r="7.300" fill="#8ab89a" stroke="#6ea684" stroke-width="1"/><path d="M3.500 2.800L8 7L12.500 2.800M8 7L2.700 12.500M8 7L13.300 12.500" fill="none" stroke="#5e9a76" stroke-width="1.200"/></g></svg>
</body></html>
